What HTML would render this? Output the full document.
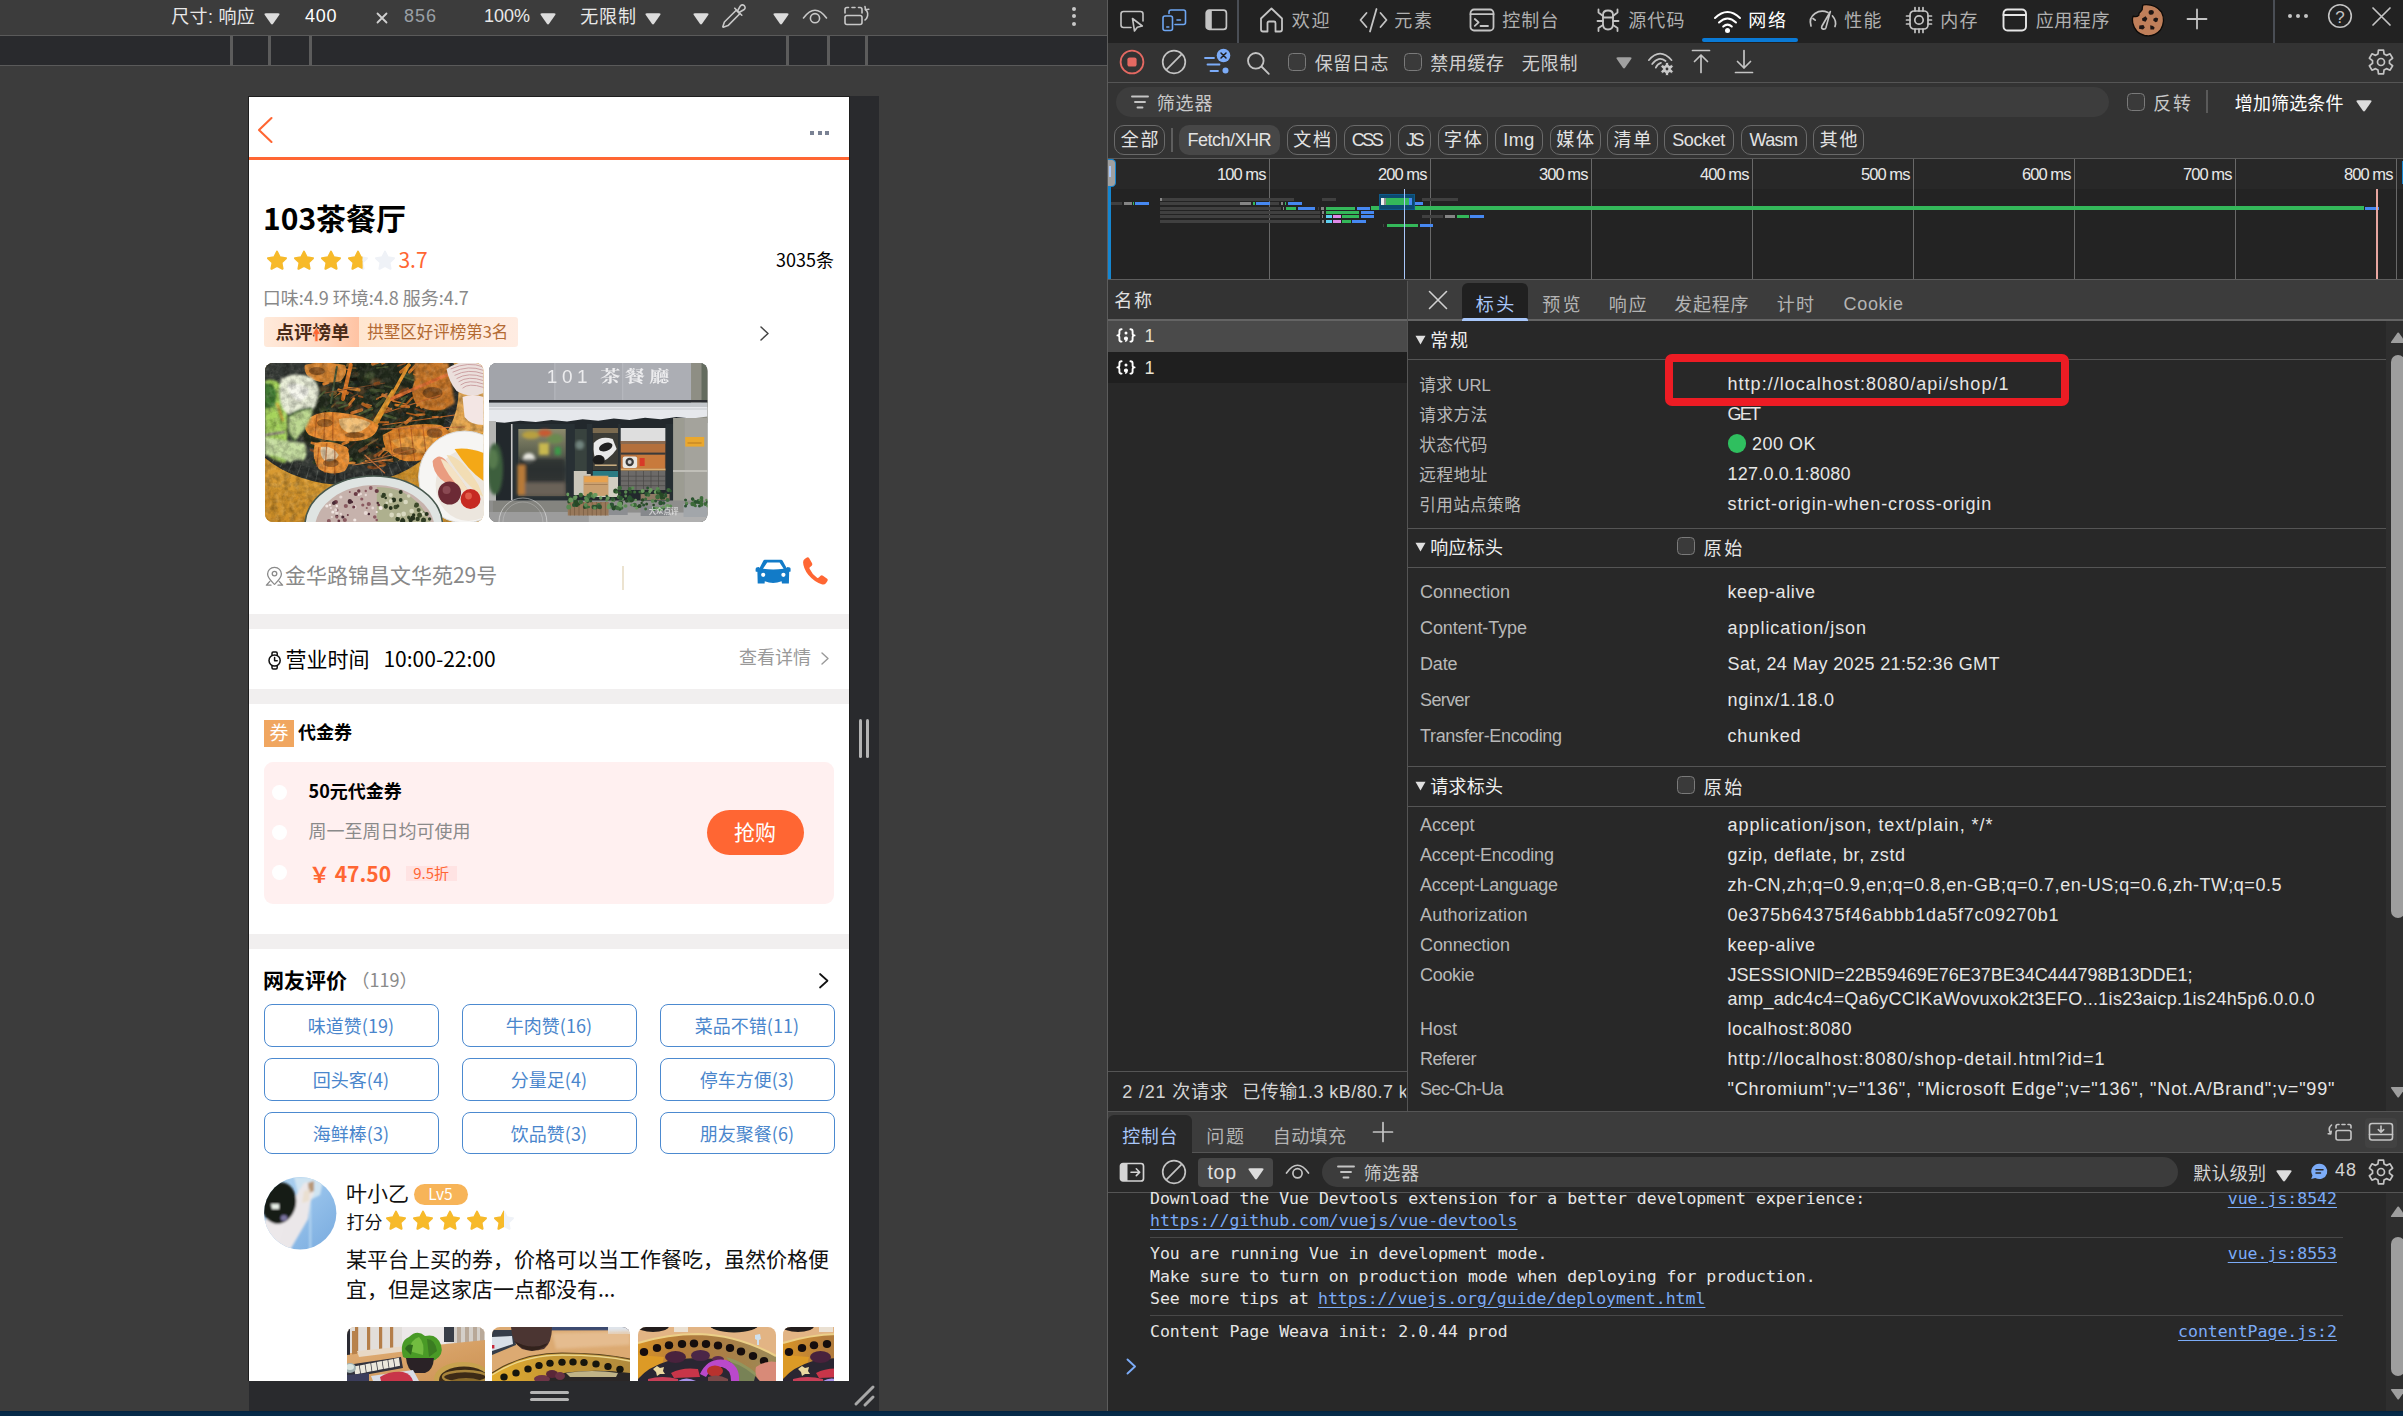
<!DOCTYPE html>
<html lang="zh-CN"><head><meta charset="utf-8"><title>shop detail devtools</title><style>
html,body{margin:0;padding:0;}
body{width:2403px;height:1416px;overflow:hidden;position:relative;background:#3c3c3c;font-family:'Liberation Sans','Noto Sans CJK SC',sans-serif;}
body>div,body>span,body>svg{position:absolute;display:block;}
body>span{white-space:pre;}
svg{overflow:visible;}
</style></head><body>
<div style="left:0px;top:0px;width:1107px;height:1411px;background:#3c3c3c;"></div>
<div style="left:0px;top:35px;width:1107px;height:1px;background:#5a5a5a;"></div>
<div style="left:0px;top:36px;width:1107px;height:29px;background:#292a2d;"></div>
<div style="left:0px;top:65px;width:1107px;height:1px;background:#5a5a5a;"></div>
<div style="left:230px;top:36px;width:3px;height:29px;background:#5c5c5c;"></div>
<div style="left:268px;top:36px;width:3px;height:29px;background:#5c5c5c;"></div>
<div style="left:309px;top:36px;width:3px;height:29px;background:#5c5c5c;"></div>
<div style="left:786px;top:36px;width:3px;height:29px;background:#5c5c5c;"></div>
<div style="left:827px;top:36px;width:3px;height:29px;background:#5c5c5c;"></div>
<div style="left:865px;top:36px;width:3px;height:29px;background:#5c5c5c;"></div>
<span id="t1" style="top:5.10px;font-size:18px;line-height:25px;color:#e8e8e8;font-family:'Liberation Sans','Noto Sans CJK SC',sans-serif;white-space:pre;left:171.28px;letter-spacing:0.321px;">尺寸: 响应</span>
<svg style="left:264px;top:13px;" width="16" height="11.7" viewBox="0 0 16 11.7" preserveAspectRatio="none"><path d="M1.8 0.2 H14.2 Q16.4 0.2 15.2 2.1 L9.1 10.799999999999999 Q8.0 12.2 6.9 10.799999999999999 L0.8 2.1 Q-0.4 0.2 1.8 0.2Z" fill="#dcdcdc"/></svg>
<span id="t2" style="top:3.70px;font-size:18px;line-height:25px;color:#ffffff;font-family:'Liberation Sans','Noto Sans CJK SC',sans-serif;white-space:pre;left:305px;letter-spacing:0.727px;">400</span>
<svg style="left:376px;top:12px;" width="12" height="12" viewBox="0 0 12 12" preserveAspectRatio="none"><path d="M1.5 1.5 L10.5 10.5 M10.5 1.5 L1.5 10.5" stroke="#d0d0d0" stroke-width="1.8" stroke-linecap="round"/></svg>
<span id="t3" style="top:3.70px;font-size:18px;line-height:25px;color:#9aa0a6;font-family:'Liberation Sans','Noto Sans CJK SC',sans-serif;white-space:pre;left:404px;letter-spacing:0.977px;">856</span>
<span id="t4" style="top:3.70px;font-size:18px;line-height:25px;color:#e8e8e8;font-family:'Liberation Sans','Noto Sans CJK SC',sans-serif;white-space:pre;left:484px;letter-spacing:-0.016px;">100%</span>
<svg style="left:540px;top:13px;" width="16" height="11.7" viewBox="0 0 16 11.7" preserveAspectRatio="none"><path d="M1.8 0.2 H14.2 Q16.4 0.2 15.2 2.1 L9.1 10.799999999999999 Q8.0 12.2 6.9 10.799999999999999 L0.8 2.1 Q-0.4 0.2 1.8 0.2Z" fill="#dcdcdc"/></svg>
<span id="t5" style="top:5.10px;font-size:18px;line-height:25px;color:#e8e8e8;font-family:'Liberation Sans','Noto Sans CJK SC',sans-serif;white-space:pre;left:580.28px;letter-spacing:0.810px;">无限制</span>
<svg style="left:645px;top:13px;" width="16" height="11.7" viewBox="0 0 16 11.7" preserveAspectRatio="none"><path d="M1.8 0.2 H14.2 Q16.4 0.2 15.2 2.1 L9.1 10.799999999999999 Q8.0 12.2 6.9 10.799999999999999 L0.8 2.1 Q-0.4 0.2 1.8 0.2Z" fill="#dcdcdc"/></svg>
<svg style="left:693px;top:13px;" width="16" height="11.7" viewBox="0 0 16 11.7" preserveAspectRatio="none"><path d="M1.8 0.2 H14.2 Q16.4 0.2 15.2 2.1 L9.1 10.799999999999999 Q8.0 12.2 6.9 10.799999999999999 L0.8 2.1 Q-0.4 0.2 1.8 0.2Z" fill="#dcdcdc"/></svg>
<svg style="left:720px;top:2px;" width="28" height="28" viewBox="0 0 28 28" preserveAspectRatio="none"><g fill="none" stroke="#c8c8c8" stroke-width="1.6" stroke-linejoin="round" stroke-linecap="round"><path d="M16.2 8.2 L19.8 11.8 L8 23.6 L3.2 25.2 L2.8 24.8 L4.4 20 Z"/><path d="M14.8 6.2 L21.8 13.2"/><path d="M17.5 9 L20.2 4.2 Q22 1.8 24.3 3.7 Q26.2 6 23.8 7.8 L19 10.5"/></g></svg>
<svg style="left:773px;top:13px;" width="16" height="11.7" viewBox="0 0 16 11.7" preserveAspectRatio="none"><path d="M1.8 0.2 H14.2 Q16.4 0.2 15.2 2.1 L9.1 10.799999999999999 Q8.0 12.2 6.9 10.799999999999999 L0.8 2.1 Q-0.4 0.2 1.8 0.2Z" fill="#dcdcdc"/></svg>
<svg style="left:802px;top:6px;" width="26" height="20" viewBox="0 0 26 20" preserveAspectRatio="none"><g fill="none" stroke="#c8c8c8" stroke-width="1.6" stroke-linecap="round"><path d="M1.5 12 Q13 -3.5 24.5 12"/><circle cx="13" cy="12.2" r="4.6"/></g></svg>
<svg style="left:843px;top:5px;" width="28" height="22" viewBox="0 0 28 22" preserveAspectRatio="none"><g fill="none" stroke="#c8c8c8" stroke-width="1.6" stroke-linecap="round" stroke-linejoin="round"><path d="M2 8 V4.5 Q2 2.5 4 2.5 H5.5 M9 2.5 H12 M15.5 2.5 H17 Q19 2.5 19 4.5 V8" stroke-dasharray="none"/><rect x="2" y="10.5" width="17" height="9" rx="2"/><path d="M22.5 4.5 Q26.5 8 23.5 13.5 L22 15"/><path d="M22 1.5 L22.5 4.8 L25.8 4.2"/></g></svg>
<div style="left:1071.5px;top:6.5px;width:4px;height:4px;background:#c8c8c8;border-radius:50%;"></div>
<div style="left:1071.5px;top:14px;width:4px;height:4px;background:#c8c8c8;border-radius:50%;"></div>
<div style="left:1071.5px;top:21.5px;width:4px;height:4px;background:#c8c8c8;border-radius:50%;"></div>
<div style="left:849px;top:96px;width:30px;height:1315px;background:#292a2d;"></div>
<div style="left:249px;top:1381px;width:630px;height:30px;background:#292a2d;"></div>
<div style="left:859px;top:719px;width:3px;height:39px;background:#b4b4b4;border-radius:1.5px;"></div>
<div style="left:866px;top:719px;width:3px;height:39px;background:#b4b4b4;border-radius:1.5px;"></div>
<div style="left:530px;top:1391px;width:39px;height:3px;background:#b4b4b4;border-radius:1.5px;"></div>
<div style="left:530px;top:1398px;width:39px;height:3px;background:#b4b4b4;border-radius:1.5px;"></div>
<svg style="left:852px;top:1382px;" width="26" height="26" viewBox="0 0 26 26" preserveAspectRatio="none"><path d="M4 22 L21 5 M13 23 L21 15" stroke="#a8a8a8" stroke-width="3" stroke-linecap="round"/></svg>
<div style="left:0px;top:1411px;width:2403px;height:5px;background:linear-gradient(#02223f,#062a48 40%);"></div>
<div style="left:248px;top:96px;width:602px;height:1285px;background:#1e1e1e;"></div>
<div style="left:249px;top:97px;width:600px;height:1284px;background:#ffffff;"></div>
<svg style="left:258px;top:116.5px;" width="14.5" height="26" viewBox="0 0 14.5 26" preserveAspectRatio="none"><path d="M13.5 1 L1 13.0 L13.5 25" fill="none" stroke="#ff6633" stroke-width="2.1" stroke-linecap="round" stroke-linejoin="round"/></svg>
<div style="left:810.4px;top:131.4px;width:3.9px;height:3.9px;background:#7a8294;"></div>
<div style="left:817.8px;top:131.4px;width:3.9px;height:3.9px;background:#7a8294;"></div>
<div style="left:825.1999999999999px;top:131.4px;width:3.9px;height:3.9px;background:#7a8294;"></div>
<div style="left:249px;top:157px;width:600px;height:3px;background:#ff6633;"></div>
<span id="t6" style="top:195.60px;font-size:30px;line-height:42px;color:#000;font-family:'Noto Sans CJK SC','Liberation Sans',sans-serif;white-space:pre;left:263.0px;font-weight:700;">103茶餐厅</span>
<svg style="left:267px;top:249.6px;" width="135" height="23" viewBox="0 0 135 23" preserveAspectRatio="none"><polygon points="10.00,1.65 12.78,7.28 18.99,8.18 14.49,12.56 15.55,18.75 10.00,15.83 4.45,18.75 5.51,12.56 1.01,8.18 7.22,7.28" fill="#eff2f7" stroke="#eff2f7" stroke-width="2" stroke-linejoin="round"/><polygon points="10.00,1.65 12.78,7.28 18.99,8.18 14.49,12.56 15.55,18.75 10.00,15.83 4.45,18.75 5.51,12.56 1.01,8.18 7.22,7.28" fill="#f7ba2a" stroke="#f7ba2a" stroke-width="2" stroke-linejoin="round"/><polygon points="37.00,1.65 39.78,7.28 45.99,8.18 41.49,12.56 42.55,18.75 37.00,15.83 31.45,18.75 32.51,12.56 28.01,8.18 34.22,7.28" fill="#eff2f7" stroke="#eff2f7" stroke-width="2" stroke-linejoin="round"/><polygon points="37.00,1.65 39.78,7.28 45.99,8.18 41.49,12.56 42.55,18.75 37.00,15.83 31.45,18.75 32.51,12.56 28.01,8.18 34.22,7.28" fill="#f7ba2a" stroke="#f7ba2a" stroke-width="2" stroke-linejoin="round"/><polygon points="64.00,1.65 66.78,7.28 72.99,8.18 68.49,12.56 69.55,18.75 64.00,15.83 58.45,18.75 59.51,12.56 55.01,8.18 61.22,7.28" fill="#eff2f7" stroke="#eff2f7" stroke-width="2" stroke-linejoin="round"/><polygon points="64.00,1.65 66.78,7.28 72.99,8.18 68.49,12.56 69.55,18.75 64.00,15.83 58.45,18.75 59.51,12.56 55.01,8.18 61.22,7.28" fill="#f7ba2a" stroke="#f7ba2a" stroke-width="2" stroke-linejoin="round"/><polygon points="91.00,1.65 93.78,7.28 99.99,8.18 95.49,12.56 96.55,18.75 91.00,15.83 85.45,18.75 86.51,12.56 82.01,8.18 88.22,7.28" fill="#eff2f7" stroke="#eff2f7" stroke-width="2" stroke-linejoin="round"/><clipPath id="sc267_249"><rect x="80" y="-1" width="15.4" height="24"/></clipPath><polygon clip-path="url(#sc267_249)" points="91.00,1.65 93.78,7.28 99.99,8.18 95.49,12.56 96.55,18.75 91.00,15.83 85.45,18.75 86.51,12.56 82.01,8.18 88.22,7.28" fill="#f7ba2a" stroke="#f7ba2a" stroke-width="2" stroke-linejoin="round"/><polygon points="118.00,1.65 120.78,7.28 126.99,8.18 122.49,12.56 123.55,18.75 118.00,15.83 112.45,18.75 113.51,12.56 109.01,8.18 115.22,7.28" fill="#eff2f7" stroke="#eff2f7" stroke-width="2" stroke-linejoin="round"/></svg>
<span id="t7" style="top:244.91px;font-size:21px;line-height:29px;color:#ff6633;font-family:'Noto Sans CJK SC','Liberation Sans',sans-serif;white-space:pre;left:398.45px;">3.7</span>
<span id="t8" style="top:246.88px;font-size:18px;line-height:25px;color:#000;font-family:'Noto Sans CJK SC','Liberation Sans',sans-serif;white-space:pre;right:1569.1px;">3035条</span>
<span id="t9" style="top:285.38px;font-size:18px;line-height:25px;color:#888;font-family:'Noto Sans CJK SC','Liberation Sans',sans-serif;white-space:pre;left:262.70000000000005px;">口味:4.9 环境:4.8 服务:4.7</span>
<div style="left:264px;top:317px;width:95px;height:30px;background:linear-gradient(90deg,#ffeadb 0%,#ffd9c2 60%,#ffc3a3 100%);border-radius:3px 0 0 3px;"></div>
<div style="left:359px;top:317px;width:159px;height:30px;background:linear-gradient(90deg,#ffe6d0,#ffece2);border-radius:0 3px 3px 0;"></div>
<span id="t10" style="top:317.83px;font-size:18.5px;line-height:26px;color:#4a2a17;font-family:'Noto Sans CJK SC','Liberation Sans',sans-serif;white-space:pre;left:275.375px;font-weight:700;">点评榜单</span>
<svg style="left:311.6px;top:327.3px;" width="8.8" height="14.8" viewBox="0 0 8.8 14.8" preserveAspectRatio="none"><path d="M4.4 0.3 L8.5 7.3 H5.9 V14.5 H2.9 V7.3 H0.3 Z" fill="#ff6633" stroke="#ffd4bc" stroke-width="0.7"/></svg>
<span id="t11" style="top:320.01px;font-size:16.5px;line-height:23px;color:#b36a33;font-family:'Noto Sans CJK SC','Liberation Sans',sans-serif;white-space:pre;left:367.175px;">拱墅区好评榜第3名</span>
<svg style="left:760px;top:326px;" width="9" height="15" viewBox="0 0 9 15" preserveAspectRatio="none"><path d="M1 1 L8 7.5 L1 14" fill="none" stroke="#444" stroke-width="1.5" stroke-linecap="round" stroke-linejoin="round"/></svg>
<svg style="left:265px;top:566px;" width="19" height="21" viewBox="0 0 19 21" preserveAspectRatio="none"><g fill="none" stroke="#8a8a8a" stroke-width="1.3" stroke-linejoin="round" stroke-linecap="round"><path d="M9.5 1.4 C5.4 1.4 2.6 4.4 2.6 8 C2.6 12 6.5 15.2 9.5 18.4 C12.5 15.2 16.4 12 16.4 8 C16.4 4.4 13.6 1.4 9.5 1.4Z"/><circle cx="9.5" cy="7.6" r="2.3"/><path d="M4.8 15.4 L1.4 19.2 H6 M14.2 15.4 L17.6 19.2 H13"/></g></svg>
<span id="t12" style="top:560.11px;font-size:21px;line-height:29px;color:#888;font-family:'Noto Sans CJK SC','Liberation Sans',sans-serif;white-space:pre;left:284.95px;">金华路锦昌文华苑29号</span>
<div style="left:622px;top:566px;width:2px;height:24px;background:#ece3d0;"></div>
<svg style="left:755px;top:559.3px;" width="36.2" height="25.4" viewBox="0 0 36.2 25.4" preserveAspectRatio="none"><path d="M9.8 0.8 H26 Q27.2 0.8 27.8 1.9 L31.6 9 L32.4 8 Q35.8 8 35.6 10.2 V12.2 Q35.6 12.8 34.4 12.8 L34.2 13 L33.9 24.6 H27 L26.6 22.2 Q18 25.8 9.8 22.2 L9.6 24.6 H2.7 L2.4 13 L2.2 12.8 Q0.6 12.8 0.6 12.2 V10.2 Q0.6 8 4 8 L4.6 9 L8.2 1.9 Q8.8 0.8 9.8 0.8 Z M12.2 3.4 H24.6 L28.6 9.8 Q18 11.2 8 9.8 Z" fill="#127bc8" fill-rule="evenodd"/><circle cx="8.2" cy="15.8" r="2.1" fill="#fff"/><circle cx="28.4" cy="15.8" r="2.1" fill="#fff"/></svg>
<svg style="left:800.3px;top:556.4px;" width="28.8" height="29.6" viewBox="0 0 30 30" preserveAspectRatio="none"><path d="M7.2 1.6 Q8.6 0.8 9.6 2.2 L12.6 7.4 Q13.3 8.8 12.2 9.8 L10.2 11.4 Q9.6 12 10 13 Q12.6 18.6 17.8 22 Q18.8 22.6 19.6 21.8 L21.4 20 Q22.6 19 23.9 19.9 L28.3 23 Q29.5 24 28.6 25.4 L27 27.6 Q25.4 29.4 22.6 28.6 Q14.8 26.2 8.6 19 Q3.4 12.6 3.2 6.4 Q3.2 3.8 5.2 2.7 Z" fill="#ff6633"/></svg>
<div style="left:249px;top:614px;width:600px;height:15px;background:#f1efef;"></div>
<div style="left:249px;top:689px;width:600px;height:15px;background:#f1efef;"></div>
<div style="left:249px;top:934px;width:600px;height:15px;background:#f1efef;"></div>
<svg style="left:266.5px;top:651px;" width="16" height="19" viewBox="0 0 16 19" preserveAspectRatio="none"><g fill="none" stroke="#111" stroke-width="1.5"><circle cx="7.6" cy="9.5" r="5.6"/><path d="M5 4.4 V2.2 Q5 1 6.2 1 H9 Q10.2 1 10.2 2.2 V4.4 M5 14.6 V16.8 Q5 18 6.2 18 H9 Q10.2 18 10.2 16.8 V14.6 M7.6 6.4 V9.8 H10.2" stroke-linecap="round" stroke-linejoin="round"/></g></svg>
<span id="t13" style="top:644.11px;font-size:21px;line-height:29px;color:#000;font-family:'Noto Sans CJK SC','Liberation Sans',sans-serif;white-space:pre;left:285.45px;">营业时间</span>
<span id="t14" style="top:644.11px;font-size:21px;line-height:29px;color:#000;font-family:'Noto Sans CJK SC','Liberation Sans',sans-serif;white-space:pre;left:383.45px;">10:00-22:00</span>
<span id="t15" style="top:644.38px;font-size:18px;line-height:25px;color:#999;font-family:'Noto Sans CJK SC','Liberation Sans',sans-serif;white-space:pre;left:739.1px;">查看详情</span>
<svg style="left:821px;top:652px;" width="8" height="13" viewBox="0 0 8 13" preserveAspectRatio="none"><path d="M1 1 L7 6.5 L1 12" fill="none" stroke="#999" stroke-width="1.4" stroke-linecap="round" stroke-linejoin="round"/></svg>
<div style="left:264px;top:720px;width:30px;height:27px;background:#f0a660;"></div>
<span id="t16" style="top:718.29px;font-size:19px;line-height:27px;color:#fff;font-family:'Noto Sans CJK SC','Liberation Sans',sans-serif;white-space:pre;left:269.5px;">券</span>
<span id="t17" style="top:719.38px;font-size:18px;line-height:25px;color:#000;font-family:'Noto Sans CJK SC','Liberation Sans',sans-serif;white-space:pre;left:298.1px;font-weight:700;">代金券</span>
<div style="left:264px;top:762px;width:570px;height:142px;background:#fff0f0;border-radius:9px;"></div>
<div style="left:271.5px;top:784.5px;width:15px;height:15px;background:#fff;border-radius:50%;"></div>
<div style="left:271.5px;top:824.5px;width:15px;height:15px;background:#fff;border-radius:50%;"></div>
<div style="left:271.5px;top:864.5px;width:15px;height:15px;background:#fff;border-radius:50%;"></div>
<span id="t18" style="top:777.88px;font-size:18px;line-height:25px;color:#000;font-family:'Noto Sans CJK SC','Liberation Sans',sans-serif;white-space:pre;left:308.6px;font-weight:700;">50元代金券</span>
<span id="t19" style="top:818.38px;font-size:18px;line-height:25px;color:#8a8a8a;font-family:'Noto Sans CJK SC','Liberation Sans',sans-serif;white-space:pre;left:308.6px;">周一至周日均可使用</span>
<span id="t20" style="top:859.11px;font-size:21px;line-height:29px;color:#ff6633;font-family:'Noto Sans CJK SC','Liberation Sans',sans-serif;white-space:pre;left:308.95px;font-weight:700;">￥ 47.50</span>
<div style="left:406px;top:866px;width:51px;height:15px;background:#ffe3e3;"></div>
<span id="t21" style="top:862.15px;font-size:15px;line-height:21px;color:#ff6633;font-family:'Noto Sans CJK SC','Liberation Sans',sans-serif;white-space:pre;left:413.25px;">9.5折</span>
<div style="left:707px;top:810px;width:97px;height:45px;background:#ff6633;border-radius:23px;"></div>
<span id="t22" style="top:816.61px;font-size:21px;line-height:29px;color:#fff;font-family:'Noto Sans CJK SC','Liberation Sans',sans-serif;white-space:pre;left:733.95px;">抢购</span>
<span id="t23" style="top:964.61px;font-size:21px;line-height:29px;color:#000;font-family:'Noto Sans CJK SC','Liberation Sans',sans-serif;white-space:pre;left:262.95px;font-weight:700;">网友评价</span>
<span id="t24" style="top:966.88px;font-size:18px;line-height:25px;color:#8a8a8a;font-family:'Noto Sans CJK SC','Liberation Sans',sans-serif;white-space:pre;left:351.5px;">（119）</span>
<svg style="left:819px;top:973px;" width="9.5" height="15.5" viewBox="0 0 9.5 15.5" preserveAspectRatio="none"><path d="M1 1 L8.5 7.75 L1 14.5" fill="none" stroke="#111" stroke-width="1.7" stroke-linecap="round" stroke-linejoin="round"/></svg>
<div style="left:264px;top:1004px;width:174.5px;height:42.5px;box-sizing:border-box;border:1.5px solid #4c8ad0;border-radius:8px;"></div>
<span id="t25" style="top:1013.28px;font-size:18px;line-height:25px;color:#4a86cc;font-family:'Noto Sans CJK SC','Liberation Sans',sans-serif;white-space:pre;left:307.85px;">味道赞(19)</span>
<div style="left:462px;top:1004px;width:174.5px;height:42.5px;box-sizing:border-box;border:1.5px solid #4c8ad0;border-radius:8px;"></div>
<span id="t26" style="top:1013.28px;font-size:18px;line-height:25px;color:#4a86cc;font-family:'Noto Sans CJK SC','Liberation Sans',sans-serif;white-space:pre;left:505.85px;">牛肉赞(16)</span>
<div style="left:660px;top:1004px;width:174.5px;height:42.5px;box-sizing:border-box;border:1.5px solid #4c8ad0;border-radius:8px;"></div>
<span id="t27" style="top:1013.28px;font-size:18px;line-height:25px;color:#4a86cc;font-family:'Noto Sans CJK SC','Liberation Sans',sans-serif;white-space:pre;left:694.85px;">菜品不错(11)</span>
<div style="left:264px;top:1058px;width:174.5px;height:42.5px;box-sizing:border-box;border:1.5px solid #4c8ad0;border-radius:8px;"></div>
<span id="t28" style="top:1067.28px;font-size:18px;line-height:25px;color:#4a86cc;font-family:'Noto Sans CJK SC','Liberation Sans',sans-serif;white-space:pre;left:312.85px;">回头客(4)</span>
<div style="left:462px;top:1058px;width:174.5px;height:42.5px;box-sizing:border-box;border:1.5px solid #4c8ad0;border-radius:8px;"></div>
<span id="t29" style="top:1067.28px;font-size:18px;line-height:25px;color:#4a86cc;font-family:'Noto Sans CJK SC','Liberation Sans',sans-serif;white-space:pre;left:510.85px;">分量足(4)</span>
<div style="left:660px;top:1058px;width:174.5px;height:42.5px;box-sizing:border-box;border:1.5px solid #4c8ad0;border-radius:8px;"></div>
<span id="t30" style="top:1067.28px;font-size:18px;line-height:25px;color:#4a86cc;font-family:'Noto Sans CJK SC','Liberation Sans',sans-serif;white-space:pre;left:699.85px;">停车方便(3)</span>
<div style="left:264px;top:1111.5px;width:174.5px;height:42.5px;box-sizing:border-box;border:1.5px solid #4c8ad0;border-radius:8px;"></div>
<span id="t31" style="top:1120.78px;font-size:18px;line-height:25px;color:#4a86cc;font-family:'Noto Sans CJK SC','Liberation Sans',sans-serif;white-space:pre;left:312.85px;">海鲜棒(3)</span>
<div style="left:462px;top:1111.5px;width:174.5px;height:42.5px;box-sizing:border-box;border:1.5px solid #4c8ad0;border-radius:8px;"></div>
<span id="t32" style="top:1120.78px;font-size:18px;line-height:25px;color:#4a86cc;font-family:'Noto Sans CJK SC','Liberation Sans',sans-serif;white-space:pre;left:510.85px;">饮品赞(3)</span>
<div style="left:660px;top:1111.5px;width:174.5px;height:42.5px;box-sizing:border-box;border:1.5px solid #4c8ad0;border-radius:8px;"></div>
<span id="t33" style="top:1120.78px;font-size:18px;line-height:25px;color:#4a86cc;font-family:'Noto Sans CJK SC','Liberation Sans',sans-serif;white-space:pre;left:699.85px;">朋友聚餐(6)</span>
<span id="t34" style="top:1177.61px;font-size:21px;line-height:29px;color:#111;font-family:'Noto Sans CJK SC','Liberation Sans',sans-serif;white-space:pre;left:345.95px;">叶小乙</span>
<div style="left:414px;top:1184px;width:54px;height:21px;background:#f7b458;border-radius:11px;"></div>
<span id="t35" style="top:1182.11px;font-size:15.5px;line-height:22px;color:#fff;font-family:'Noto Sans CJK SC','Liberation Sans',sans-serif;white-space:pre;left:428.225px;">Lv5</span>
<span id="t36" style="top:1208.88px;font-size:18px;line-height:25px;color:#111;font-family:'Noto Sans CJK SC','Liberation Sans',sans-serif;white-space:pre;left:346.6px;">打分</span>
<svg style="left:386px;top:1210px;" width="135" height="23" viewBox="0 0 135 23" preserveAspectRatio="none"><polygon points="10.00,1.65 12.78,7.28 18.99,8.18 14.49,12.56 15.55,18.75 10.00,15.83 4.45,18.75 5.51,12.56 1.01,8.18 7.22,7.28" fill="#eff2f7" stroke="#eff2f7" stroke-width="2" stroke-linejoin="round"/><polygon points="10.00,1.65 12.78,7.28 18.99,8.18 14.49,12.56 15.55,18.75 10.00,15.83 4.45,18.75 5.51,12.56 1.01,8.18 7.22,7.28" fill="#f7ba2a" stroke="#f7ba2a" stroke-width="2" stroke-linejoin="round"/><polygon points="37.00,1.65 39.78,7.28 45.99,8.18 41.49,12.56 42.55,18.75 37.00,15.83 31.45,18.75 32.51,12.56 28.01,8.18 34.22,7.28" fill="#eff2f7" stroke="#eff2f7" stroke-width="2" stroke-linejoin="round"/><polygon points="37.00,1.65 39.78,7.28 45.99,8.18 41.49,12.56 42.55,18.75 37.00,15.83 31.45,18.75 32.51,12.56 28.01,8.18 34.22,7.28" fill="#f7ba2a" stroke="#f7ba2a" stroke-width="2" stroke-linejoin="round"/><polygon points="64.00,1.65 66.78,7.28 72.99,8.18 68.49,12.56 69.55,18.75 64.00,15.83 58.45,18.75 59.51,12.56 55.01,8.18 61.22,7.28" fill="#eff2f7" stroke="#eff2f7" stroke-width="2" stroke-linejoin="round"/><polygon points="64.00,1.65 66.78,7.28 72.99,8.18 68.49,12.56 69.55,18.75 64.00,15.83 58.45,18.75 59.51,12.56 55.01,8.18 61.22,7.28" fill="#f7ba2a" stroke="#f7ba2a" stroke-width="2" stroke-linejoin="round"/><polygon points="91.00,1.65 93.78,7.28 99.99,8.18 95.49,12.56 96.55,18.75 91.00,15.83 85.45,18.75 86.51,12.56 82.01,8.18 88.22,7.28" fill="#eff2f7" stroke="#eff2f7" stroke-width="2" stroke-linejoin="round"/><polygon points="91.00,1.65 93.78,7.28 99.99,8.18 95.49,12.56 96.55,18.75 91.00,15.83 85.45,18.75 86.51,12.56 82.01,8.18 88.22,7.28" fill="#f7ba2a" stroke="#f7ba2a" stroke-width="2" stroke-linejoin="round"/><polygon points="118.00,1.65 120.78,7.28 126.99,8.18 122.49,12.56 123.55,18.75 118.00,15.83 112.45,18.75 113.51,12.56 109.01,8.18 115.22,7.28" fill="#eff2f7" stroke="#eff2f7" stroke-width="2" stroke-linejoin="round"/><clipPath id="sc386_1210"><rect x="107" y="-1" width="11.0" height="24"/></clipPath><polygon clip-path="url(#sc386_1210)" points="118.00,1.65 120.78,7.28 126.99,8.18 122.49,12.56 123.55,18.75 118.00,15.83 112.45,18.75 113.51,12.56 109.01,8.18 115.22,7.28" fill="#f7ba2a" stroke="#f7ba2a" stroke-width="2" stroke-linejoin="round"/></svg>
<span id="t37" style="top:1244.11px;font-size:21px;line-height:29px;color:#111;font-family:'Noto Sans CJK SC','Liberation Sans',sans-serif;white-space:pre;left:345.95px;">某平台上买的券，价格可以当工作餐吃，虽然价格便</span>
<span id="t38" style="top:1274.11px;font-size:21px;line-height:29px;color:#111;font-family:'Noto Sans CJK SC','Liberation Sans',sans-serif;white-space:pre;left:345.95px;">宜，但是这家店一点都没有...</span>
<svg style="left:264.7px;top:362.7px;width:218.5px;height:159px;" width="219" height="159" viewBox="0 0 219 159" preserveAspectRatio="none"><defs><clipPath id="p1c"><rect width="219" height="159" rx="8"/></clipPath><filter id="b1" x="-10%" y="-10%" width="120%" height="120%"><feGaussianBlur stdDeviation="1.1"/></filter><filter id="b2" x="-10%" y="-10%" width="120%" height="120%"><feGaussianBlur stdDeviation="2.2"/></filter><filter id="b0" x="-10%" y="-10%" width="120%" height="120%"><feGaussianBlur stdDeviation="0.5"/></filter><linearGradient id="wood" x1="0" y1="0" x2="1" y2="1"><stop offset="0" stop-color="#e0a848"/><stop offset="0.5" stop-color="#d8982c"/><stop offset="1" stop-color="#c88a28"/></linearGradient><filter id="nz" x="0" y="0" width="100%" height="100%"><feTurbulence type="fractalNoise" baseFrequency="0.16" numOctaves="3" seed="4"/><feColorMatrix type="matrix" values="0 0 0 0 0  0 0 0 0 0  0 0 0 0 0  1.6 0 0 0 -0.55"/></filter><filter id="nzw" x="0" y="0" width="100%" height="100%"><feTurbulence type="fractalNoise" baseFrequency="0.2" numOctaves="3" seed="9"/><feColorMatrix type="matrix" values="0 0 0 0 1  0 0 0 0 0.95  0 0 0 0 0.8  1.4 0 0 0 -0.6"/></filter><clipPath id="plin"><ellipse cx="80" cy="26" rx="104" ry="84"/></clipPath></defs><g clip-path="url(#p1c)"><rect width="219" height="159" fill="url(#wood)"/><path d="M0 125 L40 132 L60 159 L0 159Z" fill="#c07c14" filter="url(#b2)"/><path d="M0 100 L70 128 L45 159 L0 159Z" fill="#d89a30" opacity="0.7" filter="url(#b2)"/><rect x="150" y="0" width="69" height="70" fill="#e8a850"/><ellipse cx="80" cy="28" rx="114" ry="94" fill="#2a2e2c"/><ellipse cx="80" cy="26" rx="104" ry="84" fill="#353a36"/><path d="M177.7 54.7 L186.2 59.8" stroke="#4a504c" stroke-width="1"/><path d="M174.3 61.5 L182.4 67.3" stroke="#4a504c" stroke-width="1"/><path d="M170.1 68.0 L177.9 74.5" stroke="#4a504c" stroke-width="1"/><path d="M165.2 74.2 L172.6 81.3" stroke="#4a504c" stroke-width="1"/><path d="M159.7 80.0 L166.6 87.8" stroke="#4a504c" stroke-width="1"/><path d="M153.5 85.4 L159.9 93.8" stroke="#4a504c" stroke-width="1"/><path d="M146.8 90.3 L152.6 99.2" stroke="#4a504c" stroke-width="1"/><path d="M139.7 94.8 L144.8 104.2" stroke="#4a504c" stroke-width="1"/><path d="M132.0 98.7 L136.5 108.5" stroke="#4a504c" stroke-width="1"/><path d="M124.0 102.1 L127.8 112.3" stroke="#4a504c" stroke-width="1"/><path d="M115.6 104.9 L118.6 115.4" stroke="#4a504c" stroke-width="1"/><path d="M106.9 107.1 L109.2 117.8" stroke="#4a504c" stroke-width="1"/><path d="M98.1 108.7 L99.6 119.6" stroke="#4a504c" stroke-width="1"/><path d="M89.1 109.7 L89.8 120.6" stroke="#4a504c" stroke-width="1"/><path d="M80.0 110.0 L80.0 121.0" stroke="#4a504c" stroke-width="1"/><path d="M70.9 109.7 L70.2 120.6" stroke="#4a504c" stroke-width="1"/><path d="M61.9 108.7 L60.4 119.6" stroke="#4a504c" stroke-width="1"/><path d="M53.1 107.1 L50.8 117.8" stroke="#4a504c" stroke-width="1"/><path d="M44.4 104.9 L41.4 115.4" stroke="#4a504c" stroke-width="1"/><path d="M36.0 102.1 L32.2 112.3" stroke="#4a504c" stroke-width="1"/><path d="M28.0 98.7 L23.5 108.5" stroke="#4a504c" stroke-width="1"/><path d="M20.3 94.8 L15.2 104.2" stroke="#4a504c" stroke-width="1"/><path d="M13.2 90.3 L7.4 99.2" stroke="#4a504c" stroke-width="1"/><path d="M6.5 85.4 L0.1 93.8" stroke="#4a504c" stroke-width="1"/><path d="M0.3 80.0 L-6.6 87.8" stroke="#4a504c" stroke-width="1"/><path d="M-5.2 74.2 L-12.6 81.3" stroke="#4a504c" stroke-width="1"/><path d="M-10.1 68.0 L-17.9 74.5" stroke="#4a504c" stroke-width="1"/><path d="M-14.3 61.5 L-22.4 67.3" stroke="#4a504c" stroke-width="1"/><g filter="url(#b1)"><ellipse cx="104" cy="46" rx="78" ry="56" fill="#242a1e"/><ellipse cx="85" cy="19" rx="2.3" ry="2.8" fill="#3a4a2a"/><ellipse cx="91" cy="11" rx="2.9" ry="1.7" fill="#54452a"/><ellipse cx="97" cy="28" rx="3.7" ry="3.6" fill="#54452a"/><ellipse cx="60" cy="26" rx="5.8" ry="2.9" fill="#54452a"/><ellipse cx="95" cy="98" rx="4.2" ry="1.8" fill="#3a4a2a"/><ellipse cx="97" cy="56" rx="3.2" ry="3.5" fill="#54452a"/><ellipse cx="68" cy="60" rx="3.5" ry="2.9" fill="#1e241c"/><ellipse cx="53" cy="11" rx="4.0" ry="2.8" fill="#1e241c"/><ellipse cx="142" cy="49" rx="3.4" ry="2.1" fill="#26321e"/><ellipse cx="67" cy="79" rx="4.3" ry="2.8" fill="#3a4a2a"/><ellipse cx="154" cy="74" rx="4.4" ry="1.7" fill="#4a3a28"/><ellipse cx="109" cy="21" rx="2.6" ry="2.7" fill="#4a3a28"/><ellipse cx="50" cy="68" rx="4.3" ry="3.7" fill="#54452a"/><ellipse cx="84" cy="71" rx="4.0" ry="3.5" fill="#54452a"/><ellipse cx="54" cy="14" rx="3.9" ry="3.2" fill="#4a3a28"/><ellipse cx="53" cy="72" rx="6.0" ry="3.6" fill="#54452a"/><ellipse cx="81" cy="42" rx="2.1" ry="2.7" fill="#4a3a28"/><ellipse cx="66" cy="16" rx="2.9" ry="2.2" fill="#3a4a2a"/><ellipse cx="137" cy="43" rx="2.3" ry="2.6" fill="#26321e"/><ellipse cx="114" cy="89" rx="5.5" ry="2.2" fill="#26321e"/><ellipse cx="97" cy="39" rx="5.8" ry="1.9" fill="#26321e"/><ellipse cx="67" cy="27" rx="2.0" ry="3.6" fill="#1e241c"/><ellipse cx="68" cy="32" rx="3.7" ry="2.4" fill="#1e241c"/><ellipse cx="116" cy="96" rx="5.8" ry="3.1" fill="#54452a"/><ellipse cx="137" cy="48" rx="3.6" ry="2.5" fill="#54452a"/><ellipse cx="58" cy="65" rx="2.8" ry="4.0" fill="#3a4a2a"/><ellipse cx="100" cy="15" rx="2.2" ry="1.5" fill="#54452a"/><ellipse cx="64" cy="15" rx="4.5" ry="1.7" fill="#4a3a28"/><ellipse cx="71" cy="41" rx="5.8" ry="3.0" fill="#4a3a28"/><ellipse cx="104" cy="16" rx="6.0" ry="2.7" fill="#26321e"/><ellipse cx="105" cy="13" rx="5.0" ry="3.4" fill="#3a4a2a"/><ellipse cx="105" cy="71" rx="2.1" ry="3.9" fill="#54452a"/><ellipse cx="111" cy="19" rx="5.7" ry="3.4" fill="#54452a"/><ellipse cx="82" cy="66" rx="4.8" ry="2.2" fill="#3a4a2a"/><ellipse cx="91" cy="21" rx="4.1" ry="3.4" fill="#1e241c"/><ellipse cx="86" cy="26" rx="5.2" ry="3.5" fill="#1e241c"/><ellipse cx="137" cy="27" rx="4.0" ry="3.3" fill="#54452a"/><ellipse cx="169" cy="80" rx="3.0" ry="3.2" fill="#26321e"/><ellipse cx="165" cy="47" rx="5.8" ry="2.4" fill="#4a3a28"/><ellipse cx="73" cy="27" rx="3.4" ry="2.7" fill="#1e241c"/><ellipse cx="168" cy="63" rx="3.9" ry="3.1" fill="#3a4a2a"/><ellipse cx="145" cy="13" rx="5.6" ry="3.5" fill="#3a4a2a"/><ellipse cx="139" cy="50" rx="3.7" ry="3.1" fill="#1e241c"/><ellipse cx="56" cy="95" rx="3.9" ry="3.4" fill="#26321e"/><ellipse cx="56" cy="20" rx="2.1" ry="3.0" fill="#1e241c"/><ellipse cx="103" cy="67" rx="5.3" ry="4.0" fill="#54452a"/><ellipse cx="127" cy="38" rx="4.2" ry="1.6" fill="#54452a"/><ellipse cx="145" cy="74" rx="4.1" ry="3.8" fill="#3a4a2a"/><ellipse cx="99" cy="88" rx="2.1" ry="2.0" fill="#1e241c"/><ellipse cx="108" cy="78" rx="3.0" ry="2.5" fill="#4a3a28"/><ellipse cx="61" cy="91" rx="5.6" ry="3.2" fill="#4a3a28"/><ellipse cx="147" cy="54" rx="2.5" ry="1.9" fill="#54452a"/><ellipse cx="109" cy="88" rx="4.4" ry="3.4" fill="#1e241c"/><ellipse cx="64" cy="18" rx="4.9" ry="2.9" fill="#54452a"/><ellipse cx="86" cy="54" rx="3.9" ry="3.4" fill="#54452a"/><ellipse cx="155" cy="10" rx="3.1" ry="3.4" fill="#1e241c"/><ellipse cx="108" cy="58" rx="3.8" ry="3.0" fill="#3a4a2a"/><ellipse cx="108" cy="54" rx="3.8" ry="2.8" fill="#4a3a28"/><ellipse cx="105" cy="94" rx="5.5" ry="3.9" fill="#54452a"/><ellipse cx="77" cy="58" rx="5.4" ry="1.8" fill="#1e241c"/><ellipse cx="60" cy="47" rx="4.7" ry="2.6" fill="#3a4a2a"/><ellipse cx="72" cy="34" rx="5.6" ry="1.9" fill="#3a4a2a"/><ellipse cx="135" cy="68" rx="3.0" ry="1.8" fill="#1e241c"/><ellipse cx="103" cy="76" rx="3.6" ry="2.7" fill="#3a4a2a"/><ellipse cx="169" cy="84" rx="4.8" ry="4.0" fill="#1e241c"/><ellipse cx="95" cy="45" rx="3.3" ry="3.3" fill="#4a3a28"/><ellipse cx="47" cy="58" rx="4.8" ry="2.5" fill="#26321e"/><ellipse cx="110" cy="33" rx="2.5" ry="3.8" fill="#3a4a2a"/><ellipse cx="74" cy="88" rx="3.1" ry="1.6" fill="#3a4a2a"/><ellipse cx="142" cy="31" rx="5.3" ry="3.6" fill="#1e241c"/></g><g clip-path="url(#plin)" stroke-linecap="round" filter="url(#b0)"><path d="M141 98 l8.9 -3.0" stroke="#1f2a1a" stroke-width="2.5"/><path d="M145 9 l7.4 -8.0" stroke="#d87a28" stroke-width="3.2"/><path d="M83 2 l4.7 -4.6" stroke="#7a5a2a" stroke-width="3.1"/><path d="M54 90 l7.1 -1.9" stroke="#1f2a1a" stroke-width="2.1"/><path d="M176 65 l7.4 -8.3" stroke="#2c3a22" stroke-width="3.3"/><path d="M82 19 l9.5 4.1" stroke="#1f2a1a" stroke-width="2.9"/><path d="M86 52 l5.9 -4.5" stroke="#1a2016" stroke-width="3.4"/><path d="M49 2 l13.5 -2.6" stroke="#1f2a1a" stroke-width="2.2"/><path d="M179 11 l8.1 2.0" stroke="#3a2a1a" stroke-width="2.4"/><path d="M172 101 l5.5 -2.8" stroke="#3c4a2a" stroke-width="2.0"/><path d="M164 73 l8.0 -0.1" stroke="#b4601f" stroke-width="3.4"/><path d="M165 1 l12.8 -0.3" stroke="#d87a28" stroke-width="1.6"/><path d="M56 87 l10.2 3.4" stroke="#6a3a1c" stroke-width="2.5"/><path d="M144 5 l5.4 -4.0" stroke="#1a2016" stroke-width="1.8"/><path d="M182 101 l6.4 -0.9" stroke="#6a3a1c" stroke-width="1.7"/><path d="M70 35 l4.8 -4.8" stroke="#c8702a" stroke-width="1.6"/><path d="M117 1 l4.2 -2.5" stroke="#d87a28" stroke-width="2.5"/><path d="M101 31 l4.8 -0.1" stroke="#1f2a1a" stroke-width="3.1"/><path d="M66 93 l9.8 2.0" stroke="#8a4a1c" stroke-width="1.9"/><path d="M186 16 l10.4 1.2" stroke="#1a2016" stroke-width="3.0"/><path d="M147 53 l10.5 -3.2" stroke="#1f2a1a" stroke-width="1.5"/><path d="M119 52 l11.6 3.2" stroke="#4a5a30" stroke-width="2.7"/><path d="M159 74 l9.4 4.4" stroke="#2c3a22" stroke-width="1.3"/><path d="M63 38 l9.0 -8.5" stroke="#1f2a1a" stroke-width="1.3"/><path d="M47 55 l5.6 -3.5" stroke="#3a2a1a" stroke-width="3.0"/><path d="M152 52 l10.5 -1.6" stroke="#2c3a22" stroke-width="2.8"/><path d="M112 84 l6.1 1.8" stroke="#8a4a1c" stroke-width="1.7"/><path d="M151 101 l7.7 -1.6" stroke="#3a2a1a" stroke-width="3.2"/><path d="M85 5 l6.0 -0.1" stroke="#7a5a2a" stroke-width="1.5"/><path d="M81 77 l8.6 -4.4" stroke="#1a2016" stroke-width="2.3"/><path d="M114 101 l4.5 -4.3" stroke="#3a2a1a" stroke-width="1.8"/><path d="M118 48 l5.0 -1.3" stroke="#1f2a1a" stroke-width="1.6"/><path d="M185 97 l5.5 -6.6" stroke="#4a5a30" stroke-width="2.3"/><path d="M187 103 l12.3 -4.6" stroke="#3c4a2a" stroke-width="1.4"/><path d="M57 78 l6.5 -3.9" stroke="#7a5a2a" stroke-width="3.0"/><path d="M117 92 l6.3 0.5" stroke="#3a2a1a" stroke-width="2.1"/><path d="M67 99 l8.0 0.4" stroke="#e08a30" stroke-width="1.5"/><path d="M94 33 l3.9 1.1" stroke="#8a4a1c" stroke-width="1.9"/><path d="M101 98 l3.3 -2.4" stroke="#e08a30" stroke-width="1.8"/><path d="M98 41 l8.7 4.7" stroke="#b4601f" stroke-width="3.2"/><path d="M153 89 l3.9 -2.2" stroke="#c8702a" stroke-width="1.8"/><path d="M179 26 l7.9 -4.6" stroke="#3c4a2a" stroke-width="2.9"/><path d="M157 44 l7.6 -8.8" stroke="#d87a28" stroke-width="3.2"/><path d="M179 57 l4.5 0.5" stroke="#e08a30" stroke-width="2.1"/><path d="M133 14 l8.4 2.8" stroke="#1f2a1a" stroke-width="1.5"/><path d="M112 36 l10.1 -5.3" stroke="#c8702a" stroke-width="1.8"/><path d="M138 31 l7.9 -0.9" stroke="#15180f" stroke-width="2.6"/><path d="M55 52 l9.2 2.2" stroke="#3a2a1a" stroke-width="3.2"/><path d="M187 47 l4.5 -3.8" stroke="#2c3a22" stroke-width="1.6"/><path d="M124 33 l11.2 -4.5" stroke="#3c4a2a" stroke-width="3.2"/><path d="M152 43 l8.8 -2.9" stroke="#d87a28" stroke-width="1.8"/><path d="M152 52 l7.6 -0.7" stroke="#c8702a" stroke-width="2.3"/><path d="M135 90 l5.5 -3.8" stroke="#3c4a2a" stroke-width="2.0"/><path d="M137 45 l10.9 -5.4" stroke="#1a2016" stroke-width="1.5"/><path d="M105 79 l13.3 3.1" stroke="#3a2a1a" stroke-width="1.2"/><path d="M100 96 l12.1 3.2" stroke="#3a2a1a" stroke-width="1.7"/><path d="M60 16 l10.7 -1.8" stroke="#4a5a30" stroke-width="2.8"/><path d="M137 80 l9.2 -2.4" stroke="#1a2016" stroke-width="1.2"/><path d="M62 59 l7.4 -8.4" stroke="#15180f" stroke-width="2.6"/><path d="M120 45 l4.9 0.8" stroke="#6a3a1c" stroke-width="2.4"/><path d="M128 40 l8.3 -5.5" stroke="#1a2016" stroke-width="2.4"/><path d="M187 29 l11.1 -5.5" stroke="#3c4a2a" stroke-width="2.2"/><path d="M78 26 l10.0 4.8" stroke="#6a3a1c" stroke-width="1.3"/><path d="M72 92 l4.8 0.0" stroke="#3c4a2a" stroke-width="2.7"/><path d="M177 24 l4.9 -5.6" stroke="#d87a28" stroke-width="2.0"/><path d="M101 1 l11.0 -5.9" stroke="#2c3a22" stroke-width="1.7"/><path d="M184 32 l6.1 1.5" stroke="#3c4a2a" stroke-width="1.8"/><path d="M172 11 l10.1 -0.3" stroke="#3c4a2a" stroke-width="2.3"/><path d="M175 6 l13.2 -0.9" stroke="#1a2016" stroke-width="1.7"/><path d="M184 15 l3.1 -3.4" stroke="#d87a28" stroke-width="2.2"/><path d="M147 33 l3.5 -3.2" stroke="#15180f" stroke-width="1.9"/><path d="M71 97 l4.3 0.6" stroke="#c8702a" stroke-width="2.8"/><path d="M165 102 l4.9 -1.4" stroke="#2c3a22" stroke-width="1.8"/><path d="M95 99 l10.2 -9.1" stroke="#3c4a2a" stroke-width="2.0"/><path d="M155 32 l4.8 1.1" stroke="#e08a30" stroke-width="2.2"/><path d="M98 96 l6.2 -4.5" stroke="#3a2a1a" stroke-width="1.3"/><path d="M103 84 l4.3 0.8" stroke="#1a2016" stroke-width="2.2"/><path d="M160 6 l3.7 -2.7" stroke="#7a5a2a" stroke-width="1.9"/><path d="M83 100 l6.6 -0.2" stroke="#e08a30" stroke-width="2.7"/><path d="M177 31 l9.9 1.1" stroke="#8a4a1c" stroke-width="2.6"/><path d="M180 3 l7.4 -4.7" stroke="#3a2a1a" stroke-width="3.3"/><path d="M100 26 l8.5 -2.6" stroke="#3a2a1a" stroke-width="1.6"/><path d="M160 77 l11.4 2.9" stroke="#7a5a2a" stroke-width="1.7"/><path d="M168 48 l9.8 2.0" stroke="#1f2a1a" stroke-width="1.6"/><path d="M152 26 l3.0 -3.1" stroke="#1f2a1a" stroke-width="2.4"/><path d="M67 44 l3.4 -3.2" stroke="#7a5a2a" stroke-width="1.4"/><path d="M58 52 l8.4 0.8" stroke="#3c4a2a" stroke-width="1.5"/><path d="M110 93 l7.9 -5.1" stroke="#8a4a1c" stroke-width="2.7"/><path d="M61 87 l8.5 -4.5" stroke="#b4601f" stroke-width="1.8"/><path d="M81 46 l5.1 -3.8" stroke="#6a3a1c" stroke-width="3.1"/><path d="M127 34 l13.1 -4.7" stroke="#1f2a1a" stroke-width="2.4"/><path d="M138 10 l4.2 -1.1" stroke="#1a2016" stroke-width="2.2"/><path d="M162 87 l4.1 1.6" stroke="#6a3a1c" stroke-width="1.7"/><path d="M51 62 l5.7 1.5" stroke="#2c3a22" stroke-width="2.0"/><path d="M169 47 l10.1 -6.0" stroke="#1a2016" stroke-width="1.4"/><path d="M130 64 l6.4 -4.3" stroke="#15180f" stroke-width="1.3"/><path d="M188 4 l13.0 1.6" stroke="#4a5a30" stroke-width="1.2"/><path d="M91 71 l5.7 -4.3" stroke="#3c4a2a" stroke-width="1.3"/><path d="M115 50 l11.3 -3.9" stroke="#c8702a" stroke-width="2.4"/><path d="M136 9 l8.6 -6.8" stroke="#d87a28" stroke-width="3.4"/><path d="M140 43 l7.7 -8.4" stroke="#b4601f" stroke-width="2.1"/><path d="M47 80 l10.2 2.3" stroke="#d87a28" stroke-width="2.8"/><path d="M73 1 l7.7 2.9" stroke="#4a5a30" stroke-width="1.4"/><path d="M127 38 l5.2 1.0" stroke="#1a2016" stroke-width="2.4"/><path d="M136 95 l7.3 -7.2" stroke="#b4601f" stroke-width="2.8"/><path d="M69 36 l4.5 -3.6" stroke="#2c3a22" stroke-width="1.4"/><path d="M115 84 l5.4 2.6" stroke="#15180f" stroke-width="3.0"/><path d="M50 95 l9.0 -4.5" stroke="#c8702a" stroke-width="2.1"/><path d="M174 65 l5.4 1.4" stroke="#8a4a1c" stroke-width="3.1"/><path d="M133 64 l7.1 -5.1" stroke="#7a5a2a" stroke-width="1.7"/><path d="M102 54 l4.9 -1.9" stroke="#3c4a2a" stroke-width="3.3"/><path d="M161 20 l11.7 4.1" stroke="#c8702a" stroke-width="1.3"/><path d="M165 12 l9.5 -0.6" stroke="#c8702a" stroke-width="2.9"/><path d="M137 32 l6.7 -4.1" stroke="#b4601f" stroke-width="2.2"/><path d="M107 2 l8.9 -0.3" stroke="#3c4a2a" stroke-width="2.2"/><path d="M133 85 l11.7 3.2" stroke="#d87a28" stroke-width="1.4"/><path d="M62 45 l6.0 -5.9" stroke="#1f2a1a" stroke-width="2.6"/><path d="M50 14 l6.6 2.7" stroke="#e08a30" stroke-width="2.3"/><path d="M52 52 l12.6 -4.9" stroke="#15180f" stroke-width="1.3"/><path d="M54 64 l5.1 0.4" stroke="#15180f" stroke-width="3.4"/><path d="M115 99 l5.2 2.1" stroke="#8a4a1c" stroke-width="2.8"/><path d="M76 87 l6.5 -0.3" stroke="#b4601f" stroke-width="3.2"/><path d="M84 85 l6.9 -5.8" stroke="#3a2a1a" stroke-width="1.7"/><path d="M82 53 l3.9 -1.9" stroke="#15180f" stroke-width="2.1"/><path d="M136 29 l7.0 -3.3" stroke="#8a4a1c" stroke-width="2.9"/><path d="M61 55 l7.6 -0.1" stroke="#4a5a30" stroke-width="2.2"/><path d="M119 72 l6.1 2.3" stroke="#1f2a1a" stroke-width="2.6"/><path d="M101 83 l12.0 -7.0" stroke="#7a5a2a" stroke-width="1.5"/><path d="M92 8 l8.5 -5.5" stroke="#1a2016" stroke-width="1.9"/><path d="M118 32 l11.4 5.6" stroke="#c8702a" stroke-width="3.2"/><path d="M150 78 l5.7 -3.8" stroke="#c8702a" stroke-width="2.2"/><path d="M118 93 l4.7 -4.1" stroke="#c8702a" stroke-width="1.3"/><path d="M52 59 l8.2 -4.2" stroke="#1f2a1a" stroke-width="1.7"/><path d="M128 61 l8.4 -5.9" stroke="#3a2a1a" stroke-width="1.5"/><path d="M46 83 l8.5 0.8" stroke="#2c3a22" stroke-width="2.6"/><path d="M169 81 l6.3 -2.2" stroke="#1a2016" stroke-width="1.3"/><path d="M162 93 l9.8 -0.7" stroke="#7a5a2a" stroke-width="3.3"/><path d="M150 26 l4.1 1.6" stroke="#1f2a1a" stroke-width="1.3"/><path d="M71 17 l4.7 1.9" stroke="#7a5a2a" stroke-width="2.4"/><path d="M179 15 l8.2 -5.9" stroke="#1f2a1a" stroke-width="2.6"/><path d="M104 64 l4.6 -0.9" stroke="#c8702a" stroke-width="1.3"/><path d="M172 81 l4.0 0.4" stroke="#4a5a30" stroke-width="2.2"/><path d="M175 8 l5.8 0.1" stroke="#2c3a22" stroke-width="1.8"/><path d="M137 13 l12.5 4.5" stroke="#4a5a30" stroke-width="1.8"/><path d="M52 66 l10.8 0.6" stroke="#1f2a1a" stroke-width="3.3"/><path d="M87 97 l4.6 1.7" stroke="#1f2a1a" stroke-width="1.2"/><path d="M81 25 l13.3 1.9" stroke="#e08a30" stroke-width="3.2"/><path d="M72 40 l7.8 -0.5" stroke="#4a5a30" stroke-width="2.6"/><path d="M144 69 l7.7 3.9" stroke="#4a5a30" stroke-width="2.4"/><path d="M45 3 l5.7 2.7" stroke="#6a3a1c" stroke-width="2.9"/><path d="M100 61 l5.7 -0.6" stroke="#1a2016" stroke-width="1.3"/><path d="M59 97 l5.0 -2.2" stroke="#1a2016" stroke-width="1.3"/><path d="M64 67 l3.1 -3.5" stroke="#1a2016" stroke-width="1.3"/><path d="M129 38 l11.8 3.0" stroke="#c8702a" stroke-width="1.3"/><path d="M169 95 l4.6 2.1" stroke="#3c4a2a" stroke-width="1.6"/><path d="M49 99 l10.7 4.2" stroke="#2c3a22" stroke-width="3.0"/><path d="M135 30 l3.6 -3.4" stroke="#8a4a1c" stroke-width="2.6"/><path d="M86 35 l6.5 -3.8" stroke="#6a3a1c" stroke-width="1.3"/><path d="M153 95 l9.9 1.8" stroke="#3a2a1a" stroke-width="3.1"/><path d="M133 3 l7.9 -2.6" stroke="#8a4a1c" stroke-width="1.4"/><path d="M112 5 l11.1 -1.2" stroke="#4a5a30" stroke-width="1.4"/><path d="M162 18 l3.8 -4.7" stroke="#8a4a1c" stroke-width="2.9"/><path d="M52 36 l7.9 -7.6" stroke="#4a5a30" stroke-width="1.6"/><path d="M115 36 l6.4 1.7" stroke="#15180f" stroke-width="1.8"/><path d="M75 73 l5.0 -1.0" stroke="#c8702a" stroke-width="2.9"/><path d="M115 103 l5.0 -0.6" stroke="#b4601f" stroke-width="2.0"/><path d="M102 41 l4.6 1.7" stroke="#c8702a" stroke-width="1.3"/><path d="M74 27 l8.4 3.2" stroke="#d87a28" stroke-width="3.4"/><path d="M135 98 l7.5 -6.6" stroke="#e08a30" stroke-width="2.9"/><path d="M137 36 l5.0 -2.4" stroke="#4a5a30" stroke-width="2.2"/><path d="M124 34 l10.5 -2.7" stroke="#6a3a1c" stroke-width="2.5"/><path d="M62 48 l6.0 2.1" stroke="#3c4a2a" stroke-width="1.8"/><path d="M153 86 l11.2 -0.4" stroke="#3c4a2a" stroke-width="2.8"/><path d="M131 36 l11.4 -7.3" stroke="#6a3a1c" stroke-width="3.3"/><path d="M149 11 l4.5 2.2" stroke="#d87a28" stroke-width="1.5"/><path d="M65 31 l6.0 -3.1" stroke="#2c3a22" stroke-width="2.6"/><path d="M59 21 l4.1 -1.5" stroke="#d87a28" stroke-width="3.1"/><path d="M107 23 l6.2 3.2" stroke="#1a2016" stroke-width="1.5"/><path d="M131 42 l13.0 1.8" stroke="#d87a28" stroke-width="2.7"/><path d="M129 67 l10.3 3.0" stroke="#c8702a" stroke-width="3.1"/><path d="M155 73 l10.3 3.1" stroke="#c8702a" stroke-width="1.5"/><path d="M106 27 l12.9 1.0" stroke="#3c4a2a" stroke-width="2.9"/><path d="M147 65 l7.0 -4.3" stroke="#3a2a1a" stroke-width="1.2"/><path d="M168 54 l12.7 0.3" stroke="#c8702a" stroke-width="1.9"/><path d="M46 87 l4.7 1.8" stroke="#6a3a1c" stroke-width="2.4"/><path d="M67 81 l8.4 3.7" stroke="#2c3a22" stroke-width="3.1"/><path d="M110 21 l4.0 -1.0" stroke="#8a4a1c" stroke-width="3.0"/><path d="M119 43 l5.6 2.5" stroke="#c8702a" stroke-width="1.6"/><path d="M118 97 l10.1 1.2" stroke="#c8702a" stroke-width="1.3"/><path d="M84 42 l5.2 -6.3" stroke="#d87a28" stroke-width="2.6"/><path d="M141 60 l5.2 -4.8" stroke="#d87a28" stroke-width="3.3"/><path d="M120 23 l7.7 1.7" stroke="#3c4a2a" stroke-width="1.6"/><path d="M178 7 l5.8 1.3" stroke="#c8702a" stroke-width="2.4"/><path d="M77 100 l9.5 -4.1" stroke="#4a5a30" stroke-width="2.9"/><path d="M104 104 l10.4 1.7" stroke="#8a4a1c" stroke-width="3.0"/><path d="M95 88 l6.7 -3.9" stroke="#6a3a1c" stroke-width="3.4"/><path d="M142 50 l11.7 2.7" stroke="#b4601f" stroke-width="1.7"/><path d="M87 50 l9.9 -3.1" stroke="#c8702a" stroke-width="3.2"/><path d="M66 32 l4.5 -1.7" stroke="#7a5a2a" stroke-width="3.2"/><path d="M157 15 l10.0 2.7" stroke="#1a2016" stroke-width="2.6"/><path d="M74 7 l8.9 -4.7" stroke="#7a5a2a" stroke-width="1.5"/><path d="M78 81 l5.1 -2.2" stroke="#d87a28" stroke-width="2.9"/><path d="M68 93 l11.8 -0.6" stroke="#c8702a" stroke-width="3.2"/><path d="M123 66 l7.9 -4.2" stroke="#3c4a2a" stroke-width="2.4"/><path d="M151 46 l9.0 3.1" stroke="#6a3a1c" stroke-width="2.1"/><path d="M163 49 l8.8 -1.1" stroke="#15180f" stroke-width="2.7"/><path d="M80 17 l11.3 -0.7" stroke="#15180f" stroke-width="3.0"/><path d="M111 59 l12.4 0.4" stroke="#b4601f" stroke-width="2.1"/><path d="M188 70 l6.1 -4.6" stroke="#c8702a" stroke-width="1.3"/><path d="M132 71 l6.7 2.9" stroke="#2c3a22" stroke-width="2.3"/><path d="M114 93 l7.4 -8.4" stroke="#c8702a" stroke-width="1.5"/><path d="M58 69 l10.8 -4.8" stroke="#1f2a1a" stroke-width="2.9"/><path d="M74 45 l9.1 -2.9" stroke="#4a5a30" stroke-width="1.8"/><path d="M95 51 l12.6 -5.8" stroke="#4a5a30" stroke-width="2.3"/><path d="M184 68 l7.2 1.5" stroke="#b4601f" stroke-width="2.8"/><path d="M62 101 l10.0 -9.8" stroke="#d87a28" stroke-width="2.8"/><path d="M172 57 l4.7 -5.2" stroke="#1a2016" stroke-width="1.3"/><path d="M162 49 l4.5 0.8" stroke="#1f2a1a" stroke-width="3.2"/><path d="M132 64 l11.0 -0.2" stroke="#7a5a2a" stroke-width="3.1"/><path d="M56 4 l10.3 -0.1" stroke="#15180f" stroke-width="1.4"/><path d="M70 4 l12.9 2.4" stroke="#c8702a" stroke-width="1.2"/><path d="M170 14 l9.9 -5.0" stroke="#4a5a30" stroke-width="1.9"/><path d="M105 33 l10.0 -3.0" stroke="#1a2016" stroke-width="2.3"/><path d="M119 86 l8.1 1.5" stroke="#e08a30" stroke-width="3.2"/><path d="M108 1 l9.3 -3.5" stroke="#c8702a" stroke-width="3.4"/><path d="M112 43 l7.6 -7.2" stroke="#3c4a2a" stroke-width="3.2"/><path d="M134 44 l6.8 -8.3" stroke="#4a5a30" stroke-width="1.4"/><path d="M169 13 l7.2 -8.6" stroke="#3c4a2a" stroke-width="2.2"/><path d="M151 96 l10.6 -4.3" stroke="#e08a30" stroke-width="3.1"/><path d="M149 9 l11.1 -0.2" stroke="#3a2a1a" stroke-width="2.7"/></g><path d="M150 0 H184 L190 40 Q176 52 160 44 Q148 30 150 0Z" fill="#c8782c" filter="url(#b1)"/><g filter="url(#b0)"><path d="M40 2 Q55 -3 80 2 Q84 10 76 18 Q60 22 46 16 Q38 10 40 2Z" fill="#d88632"/><path d="M150 18 Q168 10 184 22 Q190 36 180 46 Q165 50 152 42 Q144 30 150 18Z" fill="#c87428"/><path d="M41 58 Q52 46 78 50 Q100 52 114 62 Q112 76 92 78 Q62 80 44 72 Q38 66 41 58Z" fill="#ec8e30"/><path d="M74 56 Q92 52 106 60 Q100 70 84 70 Q74 66 74 56Z" fill="#f2c078"/><path d="M50 80 Q66 76 82 84 Q88 98 80 108 Q66 114 54 106 Q46 94 50 80Z" fill="#ee9236"/><path d="M56 84 Q68 82 74 92 Q70 100 60 98 Q54 92 56 84Z" fill="#ecd0a8"/><path d="M118 72 Q140 58 176 62 Q192 70 186 84 Q168 100 140 98 Q118 92 118 72Z" fill="#e2862a"/><path d="M126 78 Q150 70 172 74 Q176 84 160 90 Q138 92 126 78Z" fill="#f0a040"/><path d="M52 52 L50 74" stroke="#a8501c" stroke-width="1.1" opacity="0.7"/><path d="M60 50 L59 77" stroke="#a8501c" stroke-width="1.1" opacity="0.7"/><path d="M68 49 L68 78" stroke="#a8501c" stroke-width="1.1" opacity="0.7"/><path d="M124 70 L128 94" stroke="#a8501c" stroke-width="1.1" opacity="0.7"/><path d="M134 66 L138 97" stroke="#a8501c" stroke-width="1.1" opacity="0.7"/><path d="M146 63 L150 98" stroke="#a8501c" stroke-width="1.1" opacity="0.7"/><path d="M158 62 L162 96" stroke="#a8501c" stroke-width="1.1" opacity="0.7"/><path d="M54 84 L52 104" stroke="#a8501c" stroke-width="1.1" opacity="0.7"/><path d="M62 80 L60 110" stroke="#a8501c" stroke-width="1.1" opacity="0.7"/><path d="M70 82 L70 112" stroke="#a8501c" stroke-width="1.1" opacity="0.7"/><ellipse cx="60" cy="60" rx="8" ry="4" fill="#5a3418" opacity="0.55"/><ellipse cx="90" cy="72" rx="10" ry="3" fill="#5a3418" opacity="0.55"/><ellipse cx="140" cy="88" rx="12" ry="4" fill="#5a3418" opacity="0.55"/><ellipse cx="170" cy="70" rx="8" ry="5" fill="#5a3418" opacity="0.55"/><ellipse cx="66" cy="100" rx="8" ry="4" fill="#5a3418" opacity="0.55"/><ellipse cx="52" cy="8" rx="8" ry="4" fill="#5a3418" opacity="0.55"/><ellipse cx="168" cy="30" rx="10" ry="6" fill="#5a3418" opacity="0.55"/></g><g fill="none" stroke-linecap="round" filter="url(#b0)"><path d="M78 36 L86 2" stroke="#e07a28" stroke-width="4"/><path d="M112 60 L144 2" stroke="#e8952a" stroke-width="3.4"/><path d="M126 36 L182 12" stroke="#e07030" stroke-width="3"/><path d="M110 58 L128 28" stroke="#e8a030" stroke-width="3.2"/><path d="M66 40 L72 4" stroke="#4a5a3a" stroke-width="2"/><path d="M118 62 L190 52" stroke="#c86a28" stroke-width="1.2"/><path d="M116 66 L200 64" stroke="#d87a40" stroke-width="1"/><path d="M100 92 L120 110" stroke="#c8703a" stroke-width="1.1"/><path d="M88 102 L128 96" stroke="#d88040" stroke-width="1"/><path d="M120 50 L176 32" stroke="#c06428" stroke-width="1.2"/><path d="M60 30 L120 20" stroke="#7a4a28" stroke-width="1"/><path d="M96 100 L150 86" stroke="#b86830" stroke-width="1"/></g><g filter="url(#b1)"><path d="M0 18 Q10 14 18 24 Q24 50 22 76 Q26 92 20 100 Q8 98 0 90Z" fill="#a6d45c"/><path d="M0 20 Q8 18 12 30 L10 44 L0 46Z" fill="#3f7a32"/><path d="M0 74 Q20 78 40 80 Q44 92 38 98 Q30 94 26 100 Q14 92 0 92Z" fill="#c6dea0"/><path d="M16 16 Q30 8 46 14 Q58 24 52 38 Q50 50 40 50 Q26 56 18 46 Q12 30 16 16Z" fill="#e9eed8"/><path d="M22 22 Q34 18 44 26 Q44 36 34 38 Q24 34 22 22Z" fill="#f6f7ee"/><path d="M24 52 Q34 44 48 46 Q46 62 30 78 Q22 76 24 52Z" fill="#bcd890"/><path d="M23 54 Q32 46 47 45" stroke="#2f5a26" stroke-width="2.2" fill="none"/><path d="M24 70 Q28 78 32 77" stroke="#2f5a26" stroke-width="2" fill="none"/><path d="M0 72 L20 69" stroke="#8a3a9a" stroke-width="1.6"/><path d="M12 40 L18 58" stroke="#f0a030" stroke-width="1.6"/></g><rect width="219" height="159" filter="url(#nz)" opacity="0.35"/><rect width="219" height="159" filter="url(#nzw)" opacity="0.22"/><g filter="url(#b0)"><path d="M182 6 Q200 -6 219 0 L219 30 Q206 36 192 28 Q184 18 182 6Z" fill="#ebdfdc"/><path d="M186 6.0 Q204 -2.0 219 4.0" stroke="#c89a9c" stroke-width="0.9" fill="none"/><path d="M188 9.2 Q204 1.6 219 7.4" stroke="#c89a9c" stroke-width="0.9" fill="none"/><path d="M190 12.4 Q204 5.2 219 10.8" stroke="#c89a9c" stroke-width="0.9" fill="none"/><path d="M192 15.600000000000001 Q204 8.8 219 14.2" stroke="#c89a9c" stroke-width="0.9" fill="none"/><path d="M194 18.8 Q204 12.4 219 17.6" stroke="#c89a9c" stroke-width="0.9" fill="none"/><path d="M196 22.0 Q204 16.0 219 21.0" stroke="#c89a9c" stroke-width="0.9" fill="none"/><path d="M198 25.200000000000003 Q204 19.6 219 24.4" stroke="#c89a9c" stroke-width="0.9" fill="none"/><path d="M198 34 Q208 30 219 34 L219 62 Q206 62 200 54Z" fill="#f3e6e4"/></g><circle cx="200" cy="114" r="46" fill="#f6f5f3"/><circle cx="200" cy="114" r="46" fill="none" stroke="#d8d8d8" stroke-width="1"/><ellipse cx="204" cy="122" rx="33" ry="36" fill="#ece6de"/><g filter="url(#b0)"><path d="M190 86 Q204 84 219 90 L219 118 Q204 108 190 86Z" fill="#f4a816"/><path d="M182 92 Q196 92 214 122 L219 134 Q200 122 182 92Z" fill="#f2ddb4"/><path d="M168 98 Q174 90 180 96 Q196 116 204 128 Q188 126 176 116 Q168 108 168 98Z" fill="#ea9c80"/><path d="M176 96 Q184 96 204 128 L198 128 Q182 112 176 96Z" fill="#f4e2c4"/><circle cx="185" cy="130" r="11.5" fill="#6c2c34"/><circle cx="182" cy="127" r="4" fill="#8a4a52"/><circle cx="206" cy="136" r="10" fill="#c62a20"/><circle cx="204" cy="133" r="3.4" fill="#e05a48"/></g><ellipse cx="109" cy="163" rx="69" ry="50" fill="#dfe4e2"/><ellipse cx="109" cy="163" rx="69" ry="50" fill="none" stroke="#47584e" stroke-width="1.6"/><ellipse cx="110" cy="166" rx="60" ry="44" fill="#c6b2ac"/><g filter="url(#b0)"><path d="M112 124 Q150 124 166 159 L112 159Z" fill="#aeb08e"/><circle cx="153" cy="156" r="2.2" fill="#2f3c24"/><circle cx="127" cy="152" r="1.7" fill="#2f3c24"/><circle cx="90" cy="144" r="1.7" fill="#f0e6e2"/><circle cx="90" cy="157" r="1.6" fill="#f0e6e2"/><circle cx="74" cy="158" r="1.4" fill="#6a3a44"/><circle cx="126" cy="145" r="1.9" fill="#26301e"/><circle cx="141" cy="139" r="2.3" fill="#d8d8c0"/><circle cx="118" cy="133" r="2.1" fill="#2f3c24"/><circle cx="127" cy="152" r="2.4" fill="#d8d8c0"/><circle cx="72" cy="153" r="1.5" fill="#4a2a34"/><circle cx="131" cy="144" r="2.3" fill="#3e4a2c"/><circle cx="85" cy="138" r="2.1" fill="#4a2a34"/><circle cx="139" cy="151" r="2.4" fill="#d8d8c0"/><circle cx="144" cy="154" r="1.6" fill="#3e4a2c"/><circle cx="149" cy="152" r="1.7" fill="#26301e"/><circle cx="65" cy="142" r="1.2" fill="#f0e6e2"/><circle cx="138" cy="156" r="1.6" fill="#3e4a2c"/><circle cx="133" cy="156" r="2.3" fill="#2f3c24"/><circle cx="106" cy="125" r="1.9" fill="#8a5a60"/><circle cx="81" cy="143" r="2.1" fill="#8a5a60"/><circle cx="113" cy="140" r="1.2" fill="#4a2a34"/><circle cx="144" cy="133" r="1.8" fill="#d8d8c0"/><circle cx="112" cy="128" r="2.1" fill="#6a3a44"/><circle cx="110" cy="154" r="1.8" fill="#8a5a60"/><circle cx="121" cy="135" r="1.3" fill="#2f3c24"/><circle cx="78" cy="154" r="1.6" fill="#4a2a34"/><circle cx="118" cy="132" r="1.8" fill="#d8d8c0"/><circle cx="159" cy="150" r="1.6" fill="#3e4a2c"/><circle cx="62" cy="143" r="1.6" fill="#f0e6e2"/><circle cx="148" cy="155" r="2.5" fill="#26301e"/><circle cx="91" cy="131" r="2.1" fill="#6a3a44"/><circle cx="129" cy="137" r="2.4" fill="#26301e"/><circle cx="96" cy="131" r="1.2" fill="#e6d8d4"/><circle cx="159" cy="157" r="2.5" fill="#2f3c24"/><circle cx="155" cy="153" r="1.6" fill="#2f3c24"/><circle cx="112" cy="149" r="1.1" fill="#f0e6e2"/><circle cx="72" cy="150" r="1.8" fill="#e6d8d4"/><circle cx="89" cy="144" r="1.6" fill="#6a3a44"/><circle cx="97" cy="136" r="1.6" fill="#8a5a60"/><circle cx="72" cy="147" r="1.6" fill="#6a3a44"/><circle cx="155" cy="152" r="2.5" fill="#3e4a2c"/><circle cx="80" cy="157" r="2.1" fill="#8a5a60"/><circle cx="71" cy="139" r="2.1" fill="#6a3a44"/><circle cx="64" cy="158" r="2.0" fill="#8a5a60"/><circle cx="108" cy="145" r="1.4" fill="#e6d8d4"/><circle cx="136" cy="129" r="2.0" fill="#26301e"/><circle cx="72" cy="154" r="1.5" fill="#8a5a60"/><circle cx="118" cy="133" r="1.6" fill="#3e4a2c"/><circle cx="68" cy="139" r="1.1" fill="#f0e6e2"/><circle cx="154" cy="147" r="2.0" fill="#3e4a2c"/><circle cx="138" cy="158" r="2.6" fill="#26301e"/><circle cx="165" cy="156" r="1.7" fill="#2f3c24"/><circle cx="101" cy="128" r="1.2" fill="#8a5a60"/><circle cx="126" cy="138" r="1.9" fill="#d8d8c0"/><circle cx="104" cy="151" r="1.3" fill="#4a2a34"/><circle cx="101" cy="132" r="1.2" fill="#e6d8d4"/><circle cx="76" cy="151" r="1.2" fill="#e6d8d4"/><circle cx="122" cy="140" r="1.4" fill="#d8d8c0"/><circle cx="71" cy="147" r="1.7" fill="#e6d8d4"/><circle cx="136" cy="137" r="1.9" fill="#2f3c24"/><circle cx="94" cy="132" r="1.1" fill="#f0e6e2"/><circle cx="101" cy="150" r="2.0" fill="#e6d8d4"/><circle cx="85" cy="129" r="1.0" fill="#8a5a60"/><circle cx="133" cy="143" r="1.7" fill="#2f3c24"/><circle cx="158" cy="158" r="1.4" fill="#2f3c24"/><circle cx="134" cy="152" r="2.3" fill="#d8d8c0"/><circle cx="151" cy="143" r="1.6" fill="#2f3c24"/><circle cx="68" cy="149" r="1.6" fill="#f0e6e2"/><circle cx="114" cy="142" r="1.3" fill="#6a3a44"/><circle cx="66" cy="145" r="1.1" fill="#e6d8d4"/><circle cx="83" cy="152" r="1.0" fill="#6a3a44"/><circle cx="157" cy="149" r="1.2" fill="#d8d8c0"/><circle cx="121" cy="143" r="2.2" fill="#3e4a2c"/><circle cx="67" cy="154" r="1.1" fill="#e6d8d4"/><circle cx="69" cy="140" r="1.9" fill="#4a2a34"/><circle cx="152" cy="142" r="2.4" fill="#3e4a2c"/><circle cx="72" cy="143" r="1.2" fill="#f0e6e2"/><circle cx="146" cy="157" r="2.2" fill="#26301e"/><circle cx="121" cy="144" r="1.8" fill="#2f3c24"/><circle cx="159" cy="151" r="1.8" fill="#d8d8c0"/><circle cx="147" cy="148" r="2.3" fill="#d8d8c0"/><circle cx="112" cy="157" r="1.3" fill="#8a5a60"/><circle cx="102" cy="145" r="1.1" fill="#8a5a60"/><circle cx="76" cy="134" r="1.6" fill="#e6d8d4"/><circle cx="162" cy="151" r="2.1" fill="#26301e"/><circle cx="144" cy="155" r="1.2" fill="#2f3c24"/><circle cx="126" cy="132" r="2.1" fill="#d8d8c0"/><circle cx="94" cy="128" r="1.7" fill="#6a3a44"/><circle cx="85" cy="139" r="2.1" fill="#4a2a34"/><circle cx="104" cy="141" r="2.1" fill="#8a5a60"/><circle cx="119" cy="132" r="2.2" fill="#2f3c24"/><circle cx="87" cy="139" r="1.3" fill="#4a2a34"/><circle cx="98" cy="142" r="1.6" fill="#8a5a60"/><circle cx="116" cy="145" r="2.0" fill="#f0e6e2"/></g></g></svg>
<svg style="left:489px;top:362.7px;width:218.5px;height:159px;" width="219" height="159" viewBox="0 0 219 159" preserveAspectRatio="none"><defs><clipPath id="p2c"><rect width="219" height="159" rx="8"/></clipPath><filter id="c0" x="-10%" y="-10%" width="120%" height="120%"><feGaussianBlur stdDeviation="0.6"/></filter><filter id="c1" x="-10%" y="-10%" width="120%" height="120%"><feGaussianBlur stdDeviation="1.4"/></filter><linearGradient id="door" x1="0" y1="0" x2="0" y2="1"><stop offset="0" stop-color="#8c8a6c"/><stop offset="0.35" stop-color="#5e6250"/><stop offset="0.6" stop-color="#34383a"/><stop offset="1" stop-color="#5c554a"/></linearGradient></defs><g clip-path="url(#p2c)"><rect width="219" height="159" fill="#22282c"/><rect x="0" y="0" width="219" height="37" fill="#a8aab0"/><rect x="0" y="0" width="66" height="37" fill="#a2a4aa"/><rect x="134" y="0" width="69" height="37" fill="#acaeb4"/><rect x="65.5" y="0" width="1" height="37" fill="#b8bac0"/><rect x="133.5" y="0" width="1" height="37" fill="#b8bac0"/><rect x="202.5" y="0" width="17" height="60" fill="#8e8e84"/><rect x="213" y="0" width="6" height="40" fill="#3a4a3a" opacity="0.5"/><text x="58" y="19.8" font-family="'Liberation Sans',sans-serif" font-size="19" fill="#ececee" letter-spacing="4.6" filter="url(#c0)">101</text><text transform="translate(111.5 19.4) scale(1.3 1)" font-family="'Noto Serif CJK SC','Noto Sans CJK SC',serif" font-weight="700" font-size="15.5" fill="#ececee" letter-spacing="3.4" filter="url(#c0)">茶餐廳</text><rect x="0" y="37" width="219" height="2.6" fill="#2c2e32"/><rect x="0" y="39.6" width="219" height="4.6" fill="#c4c8cc"/><path d="M0 44 H219 L219.0 53.4 L203.4 55.6 L187.7 54.1 L172.1 56.3 L156.4 54.8 L140.8 57.0 L125.1 55.5 L109.5 57.7 L93.9 56.3 L78.2 58.4 L62.6 57.0 L46.9 59.1 L31.3 57.7 L15.6 59.8 L0.0 58.4 Z" fill="#e6e8ec"/><path d="M0 46 H219" stroke="#d0d4d8" stroke-width="1.4"/><rect x="0" y="58" width="7" height="101" fill="#b4b4b2"/><g filter="url(#c1)"><ellipse cx="6" cy="106" rx="8" ry="26" fill="#3c5e3c"/><ellipse cx="4" cy="96" rx="5" ry="10" fill="#577a4e"/></g><rect x="22" y="61" width="64" height="78" fill="#283034"/><rect x="22" y="61" width="1.6" height="76" fill="#c8c8c8"/><rect x="29.4" y="66" width="47.5" height="67" fill="url(#door)"/><g filter="url(#c1)"><ellipse cx="42" cy="72" rx="9" ry="4" fill="#b8a040"/><ellipse cx="56" cy="70" rx="7" ry="3.5" fill="#c85a30"/><ellipse cx="66" cy="76" rx="8" ry="5" fill="#6a8a50"/><rect x="50" y="80" width="10" height="12" fill="#c8b850"/><rect x="66" y="84" width="6" height="8" fill="#3a9a4a"/><ellipse cx="40" cy="95" rx="6" ry="5" fill="#e8e8e0"/><rect x="30" y="96" width="46" height="22" fill="#2a2e2c" opacity="0.75"/><rect x="28.5" y="102" width="8" height="30" fill="#b87a38"/><rect x="36" y="120" width="40" height="12" fill="#6a6258"/></g><rect x="86" y="66" width="16" height="42" fill="#38423e"/><circle cx="91" cy="82" r="4.5" fill="#8aa09a" opacity="0.7" filter="url(#c1)"/><rect x="85" y="108" width="17" height="24" fill="#cac6ba"/><rect x="98" y="61" width="5.5" height="50" fill="#283034"/><rect x="104" y="65" width="25.5" height="42" fill="#3c3c36"/><g filter="url(#c0)"><rect x="104" y="65" width="25.5" height="5" fill="#7a6a50"/><path d="M105 80 Q112 72 124 76 L128 86 Q120 98 108 100 Q104 92 105 80Z" fill="#eaeaea"/><ellipse cx="117" cy="84" rx="7" ry="4" fill="#202020" transform="rotate(-20 117 84)"/><ellipse cx="110" cy="97" rx="6" ry="5" fill="#1c1c1c"/><rect x="106" y="101.5" width="22" height="1.4" fill="#d8b888"/></g><rect x="104" y="108" width="25.5" height="6" fill="#2a7a82"/><rect x="104" y="114" width="25.5" height="20" fill="#d2cec2"/><rect x="129.5" y="61" width="2.4" height="76" fill="#283034"/><rect x="132" y="65" width="45" height="13" fill="#dedede"/><rect x="132" y="78" width="45" height="28" fill="#b4703c"/><rect x="132" y="78" width="45" height="3" fill="#8a6a50"/><rect x="132" y="89.6" width="45" height="2" fill="#3a3a3a"/><rect x="148" y="92" width="28" height="13" fill="#c87a3c"/><rect x="134" y="93.5" width="14.5" height="11.5" rx="2" fill="#e8e6e0"/><circle cx="141" cy="99" r="4.2" fill="#3a3a3a"/><circle cx="141" cy="99" r="2" fill="#d0d0d0"/><rect x="151" y="95" width="5" height="8" fill="#d83a28"/><rect x="132" y="105.6" width="49" height="2" fill="#dcae70"/><rect x="132" y="108" width="45" height="19" fill="#6c6a68"/><rect x="139.5" y="108" width="0.7" height="19" fill="#4a4846"/><rect x="147.0" y="108" width="0.7" height="19" fill="#4a4846"/><rect x="154.5" y="108" width="0.7" height="19" fill="#4a4846"/><rect x="162.0" y="108" width="0.7" height="19" fill="#4a4846"/><rect x="169.5" y="108" width="0.7" height="19" fill="#4a4846"/><rect x="132" y="112.8" width="45" height="0.7" fill="#4a4846"/><rect x="132" y="117.6" width="45" height="0.7" fill="#4a4846"/><rect x="132" y="122.4" width="45" height="0.7" fill="#4a4846"/><rect x="177" y="61" width="7.5" height="80" fill="#262e32"/><rect x="184.5" y="55" width="11" height="104" fill="#9c9c92"/><rect x="195.5" y="55" width="24" height="104" fill="#a4a39c"/><rect x="184.5" y="107" width="35" height="2" fill="#c0bfb8"/><rect x="196.7" y="74" width="19" height="9.6" fill="#eaa82e"/><rect x="199" y="79.5" width="14" height="1" fill="#b87a20"/><rect x="0" y="137.5" width="219" height="22" fill="#8e8e8c"/><rect x="4" y="138" width="76" height="11" fill="#84847f"/><rect x="0" y="149" width="219" height="10" fill="#9c9c9c"/><rect x="100" y="150" width="119" height="9" fill="#b0b0b0"/><rect x="94.7" y="112.7" width="25" height="20.2" fill="#caa070"/><rect x="95.5" y="113.6" width="23.4" height="5.6" fill="#e8a24e"/><rect x="95.5" y="121" width="23.4" height="0.8" fill="#a07a50"/><rect x="79" y="139" width="41" height="13.5" fill="#98785a"/><rect x="81.0" y="139" width="0.8" height="13.5" fill="#7a5e44"/><rect x="85.4" y="139" width="0.8" height="13.5" fill="#7a5e44"/><rect x="89.8" y="139" width="0.8" height="13.5" fill="#7a5e44"/><rect x="94.2" y="139" width="0.8" height="13.5" fill="#7a5e44"/><rect x="98.6" y="139" width="0.8" height="13.5" fill="#7a5e44"/><rect x="103.0" y="139" width="0.8" height="13.5" fill="#7a5e44"/><rect x="107.4" y="139" width="0.8" height="13.5" fill="#7a5e44"/><rect x="111.80000000000001" y="139" width="0.8" height="13.5" fill="#7a5e44"/><rect x="116.2" y="139" width="0.8" height="13.5" fill="#7a5e44"/><rect x="120" y="143" width="19" height="9" fill="#8c8e92"/><rect x="152" y="143" width="29" height="10" fill="#86888c"/><rect x="152" y="131" width="29" height="6" fill="#8e7a64"/><rect x="195" y="141" width="24" height="13" fill="#a2a6aa"/><g filter="url(#c0)"><circle cx="125" cy="137" r="1.8" fill="#274828"/><circle cx="167" cy="129" r="1.9" fill="#6a9a5e"/><circle cx="142" cy="129" r="1.6" fill="#274828"/><circle cx="87" cy="142" r="2.0" fill="#3c6a3a"/><circle cx="119" cy="135" r="2.1" fill="#6a9a5e"/><circle cx="143" cy="142" r="1.3" fill="#3c6a3a"/><circle cx="81" cy="135" r="2.0" fill="#274828"/><circle cx="87" cy="139" r="2.6" fill="#274828"/><circle cx="182" cy="143" r="1.6" fill="#5a8a52"/><circle cx="102" cy="131" r="2.0" fill="#3c6a3a"/><circle cx="80" cy="139" r="1.5" fill="#2c5230"/><circle cx="173" cy="135" r="1.8" fill="#274828"/><circle cx="137" cy="129" r="1.7" fill="#5a8a52"/><circle cx="121" cy="144" r="1.5" fill="#2c5230"/><circle cx="161" cy="129" r="1.5" fill="#6a9a5e"/><circle cx="131" cy="146" r="1.8" fill="#2c5230"/><circle cx="118" cy="133" r="1.2" fill="#2c5230"/><circle cx="168" cy="145" r="1.6" fill="#6a9a5e"/><circle cx="170" cy="129" r="2.6" fill="#274828"/><circle cx="141" cy="137" r="2.6" fill="#3c6a3a"/><circle cx="158" cy="132" r="1.7" fill="#5a8a52"/><circle cx="144" cy="125" r="1.7" fill="#5a8a52"/><circle cx="125" cy="145" r="2.4" fill="#274828"/><circle cx="92" cy="133" r="1.6" fill="#2c5230"/><circle cx="102" cy="138" r="1.4" fill="#2c5230"/><circle cx="143" cy="137" r="2.4" fill="#274828"/><circle cx="141" cy="134" r="1.4" fill="#3c6a3a"/><circle cx="131" cy="130" r="1.6" fill="#274828"/><circle cx="164" cy="138" r="1.9" fill="#5a8a52"/><circle cx="175" cy="146" r="1.5" fill="#2c5230"/><circle cx="136" cy="143" r="1.3" fill="#6a9a5e"/><circle cx="100" cy="144" r="1.3" fill="#3c6a3a"/><circle cx="133" cy="145" r="1.7" fill="#3c6a3a"/><circle cx="171" cy="146" r="2.0" fill="#6a9a5e"/><circle cx="80" cy="144" r="2.5" fill="#5a8a52"/><circle cx="80" cy="138" r="1.3" fill="#274828"/><circle cx="86" cy="135" r="2.2" fill="#5a8a52"/><circle cx="172" cy="140" r="2.3" fill="#2c5230"/><circle cx="173" cy="132" r="2.5" fill="#274828"/><circle cx="169" cy="134" r="2.4" fill="#3c6a3a"/><circle cx="138" cy="138" r="1.7" fill="#274828"/><circle cx="105" cy="134" r="1.7" fill="#5a8a52"/><circle cx="154" cy="137" r="1.8" fill="#274828"/><circle cx="134" cy="136" r="1.2" fill="#6a9a5e"/><circle cx="141" cy="135" r="2.5" fill="#2c5230"/><circle cx="90" cy="141" r="1.6" fill="#274828"/><circle cx="79" cy="131" r="1.5" fill="#6a9a5e"/><circle cx="96" cy="144" r="1.9" fill="#274828"/><circle cx="103" cy="133" r="1.5" fill="#5a8a52"/><circle cx="123" cy="142" r="2.4" fill="#2c5230"/><circle cx="118" cy="137" r="1.5" fill="#5a8a52"/><circle cx="92" cy="132" r="2.2" fill="#3c6a3a"/><circle cx="177" cy="131" r="1.4" fill="#2c5230"/><circle cx="127" cy="144" r="1.7" fill="#274828"/><circle cx="132" cy="139" r="1.8" fill="#6a9a5e"/><circle cx="169" cy="126" r="2.0" fill="#5a8a52"/><circle cx="110" cy="142" r="2.1" fill="#3c6a3a"/><circle cx="158" cy="131" r="2.3" fill="#2c5230"/><circle cx="180" cy="127" r="2.1" fill="#3c6a3a"/><circle cx="146" cy="142" r="2.2" fill="#3c6a3a"/><circle cx="99" cy="135" r="2.2" fill="#2c5230"/><circle cx="157" cy="136" r="1.5" fill="#3c6a3a"/><circle cx="106" cy="132" r="1.9" fill="#6a9a5e"/><circle cx="182" cy="128" r="1.3" fill="#2c5230"/><circle cx="175" cy="140" r="1.8" fill="#2c5230"/><circle cx="98" cy="144" r="1.7" fill="#3c6a3a"/><circle cx="137" cy="143" r="1.8" fill="#5a8a52"/><circle cx="146" cy="129" r="1.5" fill="#3c6a3a"/><circle cx="172" cy="146" r="2.0" fill="#5a8a52"/><circle cx="160" cy="132" r="1.7" fill="#3c6a3a"/><circle cx="87" cy="134" r="1.8" fill="#6a9a5e"/><circle cx="107" cy="144" r="2.3" fill="#2c5230"/><circle cx="85" cy="142" r="1.9" fill="#2c5230"/><circle cx="149" cy="144" r="1.4" fill="#274828"/><circle cx="132" cy="140" r="2.5" fill="#274828"/><circle cx="129" cy="145" r="2.3" fill="#3c6a3a"/><circle cx="124" cy="137" r="2.1" fill="#6a9a5e"/><circle cx="132" cy="143" r="1.6" fill="#6a9a5e"/><circle cx="148" cy="145" r="1.5" fill="#6a9a5e"/><circle cx="166" cy="145" r="1.6" fill="#6a9a5e"/><circle cx="130" cy="134" r="1.9" fill="#3c6a3a"/><circle cx="141" cy="126" r="1.9" fill="#3c6a3a"/><circle cx="120" cy="142" r="1.4" fill="#6a9a5e"/><circle cx="175" cy="135" r="1.6" fill="#274828"/><circle cx="127" cy="128" r="2.5" fill="#274828"/><circle cx="175" cy="144" r="1.6" fill="#6a9a5e"/><circle cx="98" cy="138" r="1.4" fill="#5a8a52"/><circle cx="159" cy="125" r="1.4" fill="#2c5230"/><circle cx="153" cy="130" r="1.3" fill="#274828"/><circle cx="154" cy="128" r="2.1" fill="#6a9a5e"/><circle cx="153" cy="140" r="1.2" fill="#274828"/><circle cx="144" cy="142" r="1.4" fill="#6a9a5e"/><circle cx="99" cy="138" r="1.9" fill="#2c5230"/><circle cx="167" cy="138" r="1.5" fill="#2c5230"/><circle cx="155" cy="142" r="1.6" fill="#2c5230"/><circle cx="111" cy="144" r="2.3" fill="#2c5230"/><circle cx="170" cy="128" r="1.6" fill="#3c6a3a"/><circle cx="88" cy="142" r="2.0" fill="#274828"/><circle cx="151" cy="129" r="1.3" fill="#3c6a3a"/><circle cx="137" cy="133" r="1.4" fill="#5a8a52"/><circle cx="131" cy="141" r="2.6" fill="#6a9a5e"/><circle cx="165" cy="142" r="1.3" fill="#274828"/><circle cx="82" cy="137" r="2.5" fill="#6a9a5e"/><circle cx="128" cy="129" r="1.5" fill="#3c6a3a"/><circle cx="165" cy="146" r="2.0" fill="#3c6a3a"/><circle cx="92" cy="139" r="2.3" fill="#3c6a3a"/><circle cx="112" cy="135" r="1.7" fill="#6a9a5e"/><circle cx="100" cy="133" r="2.4" fill="#3c6a3a"/><circle cx="97" cy="135" r="1.8" fill="#5a8a52"/><circle cx="131" cy="125" r="2.3" fill="#3c6a3a"/><circle cx="151" cy="143" r="2.0" fill="#274828"/><circle cx="98" cy="137" r="2.3" fill="#5a8a52"/><circle cx="105" cy="144" r="2.3" fill="#2c5230"/><circle cx="120" cy="144" r="2.2" fill="#6a9a5e"/><circle cx="158" cy="141" r="1.5" fill="#274828"/><circle cx="97" cy="142" r="1.9" fill="#5a8a52"/><circle cx="79" cy="132" r="1.3" fill="#6a9a5e"/><circle cx="106" cy="145" r="1.7" fill="#5a8a52"/><circle cx="147" cy="137" r="1.3" fill="#6a9a5e"/><circle cx="132" cy="135" r="2.2" fill="#2c5230"/><circle cx="157" cy="146" r="1.4" fill="#3c6a3a"/><circle cx="124" cy="136" r="2.1" fill="#2c5230"/><circle cx="107" cy="132" r="1.9" fill="#6a9a5e"/><circle cx="179" cy="137" r="2.1" fill="#3c6a3a"/><circle cx="162" cy="127" r="2.1" fill="#6a9a5e"/><circle cx="177" cy="133" r="1.7" fill="#2c5230"/><circle cx="179" cy="143" r="2.1" fill="#6a9a5e"/><circle cx="197" cy="143" r="1.5" fill="#2c5230"/><circle cx="205" cy="137" r="1.5" fill="#5a8a52"/><circle cx="211" cy="139" r="2.0" fill="#2c5230"/><circle cx="213" cy="135" r="1.9" fill="#3c6a3a"/><circle cx="211" cy="138" r="1.7" fill="#5a8a52"/><circle cx="217" cy="141" r="1.9" fill="#3c6a3a"/><circle cx="213" cy="138" r="1.7" fill="#3c6a3a"/><circle cx="207" cy="143" r="1.3" fill="#3c6a3a"/><circle cx="198" cy="141" r="1.4" fill="#2c5230"/><circle cx="218" cy="137" r="1.3" fill="#5a8a52"/><circle cx="210" cy="139" r="2.2" fill="#3c6a3a"/><circle cx="204" cy="136" r="1.7" fill="#2c5230"/><circle cx="211" cy="139" r="2.0" fill="#2c5230"/><circle cx="212" cy="138" r="1.8" fill="#5a8a52"/><circle cx="219" cy="143" r="1.4" fill="#5a8a52"/><circle cx="207" cy="139" r="2.1" fill="#2c5230"/><circle cx="210" cy="138" r="1.9" fill="#2c5230"/><circle cx="213" cy="141" r="2.0" fill="#3c6a3a"/><circle cx="213" cy="137" r="1.8" fill="#3c6a3a"/><circle cx="211" cy="137" r="1.2" fill="#5a8a52"/><circle cx="197" cy="137" r="1.2" fill="#2c5230"/><circle cx="197" cy="137" r="1.3" fill="#2c5230"/><circle cx="198" cy="140" r="1.5" fill="#5a8a52"/><circle cx="219" cy="139" r="1.5" fill="#2c5230"/><circle cx="204" cy="141" r="2.2" fill="#3c6a3a"/><circle cx="206" cy="142" r="1.7" fill="#3c6a3a"/><circle cx="213" cy="138" r="1.6" fill="#3c6a3a"/><circle cx="211" cy="143" r="1.5" fill="#2c5230"/><circle cx="213" cy="142" r="1.7" fill="#3c6a3a"/><circle cx="204" cy="136" r="1.3" fill="#2c5230"/></g><circle cx="34" cy="159" r="24" fill="none" stroke="#ffffff" stroke-width="1" opacity="0.45"/><circle cx="34" cy="159" r="20" fill="none" stroke="#ffffff" stroke-width="0.6" opacity="0.35"/><text x="160" y="151" font-family="'Noto Sans CJK SC',sans-serif" font-size="7.5" fill="#fff" opacity="0.6" font-weight="700">大众点评</text></g></svg>
<svg style="left:347.2px;top:1327px;overflow:hidden;" width="138" height="54" viewBox="0 0 138 54" preserveAspectRatio="none"><defs><clipPath id="r1c"><rect width="138" height="80" rx="8"/></clipPath><filter id="d0" x="-10%" y="-10%" width="120%" height="120%"><feGaussianBlur stdDeviation="0.7"/></filter><filter id="d1" x="-10%" y="-10%" width="120%" height="120%"><feGaussianBlur stdDeviation="1.6"/></filter><linearGradient id="tb1" x1="0" y1="0" x2="1" y2="1"><stop offset="0" stop-color="#e2b078"/><stop offset="1" stop-color="#cc9254"/></linearGradient></defs><g clip-path="url(#r1c)"><rect width="138" height="80" fill="url(#tb1)"/><rect width="138" height="26" fill="#e2deda"/><g filter="url(#d0)"><rect x="8" y="0" width="3.2" height="26" fill="#b47e48"/><rect x="20" y="0" width="3.2" height="26" fill="#b47e48"/><rect x="32" y="0" width="3.2" height="26" fill="#b47e48"/><rect x="43" y="0" width="3.2" height="26" fill="#b47e48"/><rect x="0" y="0" width="3" height="28" fill="#2a2a30"/><rect x="5" y="4" width="5" height="24" fill="#b8824c"/><rect x="55" y="0" width="44" height="18" fill="#ece8e8"/><rect x="97" y="0" width="10" height="15" fill="#383e46"/><rect x="110" y="0" width="4" height="16" fill="#a89078"/><rect x="118" y="0" width="4" height="16" fill="#a89078"/><rect x="126" y="0" width="4" height="16" fill="#a89078"/><rect x="133" y="0" width="4" height="16" fill="#a89078"/><rect x="107" y="0" width="31" height="16" fill="#c8c0b8" opacity="0.5"/><path d="M0 28 L60 21 L138 13 L138 54 L0 54Z" fill="url(#tb1)"/><path d="M10 24 L60 19 L60 24 L12 30Z" fill="#e8d8c4"/><path d="M56 30 Q52 14 62 10 Q70 2 78 9 Q90 6 94 18 Q97 28 88 33 Q72 38 56 30Z" fill="#4a9a28"/><path d="M62 24 Q64 12 72 10 Q78 16 76 28Z" fill="#72bc40"/><path d="M80 12 Q88 12 90 24 L82 30Z" fill="#3a7c20"/><path d="M58 22 Q60 16 66 18 L64 28Z" fill="#2f6a1c"/><path d="M59 31 H87 Q86 44 78 46 H68 Q60 43 59 31Z" fill="#2a2426"/><path d="M0 38 L54 30 L56 41 L6 50 L0 50Z" fill="#30303a"/><path d="M7.0 39.5 l5 -1 l1.2 8 l-5 1z" fill="#ebe8dc"/><path d="M12.7 38.4 l5 -1 l1.2 8 l-5 1z" fill="#ebe8dc"/><path d="M18.4 37.3 l5 -1 l1.2 8 l-5 1z" fill="#ebe8dc"/><path d="M24.1 36.2 l5 -1 l1.2 8 l-5 1z" fill="#ebe8dc"/><path d="M29.8 35.1 l5 -1 l1.2 8 l-5 1z" fill="#ebe8dc"/><path d="M35.5 34.0 l5 -1 l1.2 8 l-5 1z" fill="#ebe8dc"/><path d="M41.2 32.9 l5 -1 l1.2 8 l-5 1z" fill="#ebe8dc"/><path d="M46.9 31.8 l5 -1 l1.2 8 l-5 1z" fill="#ebe8dc"/><ellipse cx="3" cy="41" rx="6" ry="5" fill="#a4b4b4"/><ellipse cx="3" cy="40" rx="4" ry="3" fill="#d8e4e0"/><path d="M0 48 L22 46 L22 54 L0 54Z" fill="#3a3c5c"/><path d="M24 49 L66 43 L72 54 L26 54Z" fill="#d8dce6"/><path d="M33 50 Q42 44 56 45 Q64 47 66 54 L34 54Z" fill="#c8364a"/><ellipse cx="116" cy="52" rx="29" ry="17" fill="#c8a250"/><ellipse cx="117" cy="53" rx="25" ry="13.5" fill="#3c2c18"/><ellipse cx="118" cy="50" rx="22" ry="6" fill="none" stroke="#a8843a" stroke-width="2.4"/><ellipse cx="119" cy="58" rx="19" ry="7" fill="#8a6a2c"/></g></g></svg>
<svg style="left:492px;top:1327px;overflow:hidden;" width="138" height="54" viewBox="0 0 138 54" preserveAspectRatio="none"><defs><clipPath id="r2c"><rect width="138" height="80" rx="8"/></clipPath><linearGradient id="gd2" x1="0" y1="0" x2="1" y2="0"><stop offset="0" stop-color="#e2ac2c"/><stop offset="0.4" stop-color="#c89a34"/><stop offset="1" stop-color="#b08a3c"/></linearGradient></defs><g clip-path="url(#r2c)"><rect width="138" height="80" fill="#dcaa72"/><rect x="50" width="88" height="3.4" fill="#3c4a70"/><rect x="116" y="0" width="22" height="7" fill="#dfe4ea" filter="url(#d0)"/><path d="M60 6 L138 4 L138 18 L64 22Z" fill="#e8c49c" opacity="0.7" filter="url(#d1)"/><g filter="url(#d0)"><path d="M0 3 L22 3 L24 18 L0 28Z" fill="#363e48"/><path d="M0 10 L20 9 L21 17 L0 24Z" fill="#d8e0e8"/><rect x="0" y="18" width="2.4" height="3.5" fill="#c82838"/><path d="M19 0 H60 Q60 16 52 22 Q40 25 30 22 Q20 16 19 0Z" fill="#4c3632"/><path d="M22 14 Q40 24 56 16 Q52 22 40 24 Q28 22 22 14Z" fill="#32221e"/><path d="M0 46 Q30 26 70 26 Q110 26 138 32 L138 80 L0 80Z" fill="url(#gd2)"/><path d="M0 46 Q30 26 70 26 Q110 26 138 32" fill="none" stroke="#5a4420" stroke-width="1.2"/><path d="M0 48 Q30 28 70 28 Q110 28 138 34" fill="none" stroke="#ecd890" stroke-width="1.4"/><path d="M52 50 Q90 40 138 46 L138 54 L46 54Z" fill="#2a2826"/><path d="M74 46 Q100 42 126 46 L124 50 L78 50Z" fill="#e6d6a0" opacity="0.8"/><ellipse cx="12" cy="50" rx="3.7" ry="3.5" fill="#18120e"/><ellipse cx="24" cy="46" rx="3.7" ry="3.5" fill="#18120e"/><ellipse cx="36" cy="42" rx="3.7" ry="3.5" fill="#18120e"/><ellipse cx="47" cy="38.5" rx="3.7" ry="3.5" fill="#18120e"/><ellipse cx="58" cy="36.3" rx="3.7" ry="3.5" fill="#18120e"/><ellipse cx="70" cy="35.2" rx="3.7" ry="3.5" fill="#18120e"/><ellipse cx="81" cy="35" rx="3.7" ry="3.5" fill="#18120e"/><ellipse cx="92" cy="35.5" rx="3.7" ry="3.5" fill="#18120e"/><ellipse cx="104" cy="37" rx="3.7" ry="3.5" fill="#18120e"/><ellipse cx="116" cy="39.4" rx="3.7" ry="3.5" fill="#18120e"/><ellipse cx="128" cy="42.2" rx="3.7" ry="3.5" fill="#18120e"/><ellipse cx="50" cy="52" rx="8" ry="4" fill="#6e3446"/><ellipse cx="60" cy="47" rx="6" ry="4" fill="#5a2838"/><ellipse cx="68" cy="49" rx="5" ry="4" fill="#6a3044"/></g></g></svg>
<svg style="left:638px;top:1327px;overflow:hidden;" width="138" height="54" viewBox="0 0 138 54" preserveAspectRatio="none"><defs><clipPath id="r3c"><rect width="138" height="80" rx="8"/></clipPath><linearGradient id="gr3c" x1="0" y1="0" x2="1" y2="0"><stop offset="0" stop-color="#d89426"/><stop offset="0.3" stop-color="#b47c3c"/><stop offset="0.7" stop-color="#a88048"/><stop offset="1" stop-color="#9a8a58"/></linearGradient></defs><g clip-path="url(#r3c)"><rect width="138" height="80" fill="#e2b484"/><g filter="url(#d0)"><ellipse cx="15" cy="-1" rx="16" ry="6" fill="#241e1e"/><ellipse cx="96" cy="-3" rx="25" ry="8.5" fill="#1e1a1a"/><rect x="36" y="0" width="14" height="5" fill="#eef2f4" opacity="0.7"/><path d="M117 8 l5 -1 l1 5 l-2 1 l0 5 l-2 0 l0 -5 l-2 -1z" fill="#cfe0ee"/><path d="M0 16 Q30 7 60 7 Q100 8 138 29 L138 80 L0 80Z" fill="url(#gr3c)"/><path d="M0 16 Q30 7 60 7 Q100 8 138 29" fill="none" stroke="#ecd088" stroke-width="2"/><path d="M0 28 L26 30 L22 46 L0 50Z" fill="#dc9a26"/><path d="M0 52 Q10 40 30 34 Q60 28 90 34 Q110 40 122 54 L0 54Z" fill="#2a2630"/><path d="M88 30 Q104 34 118 46 L116 54 L100 54 Q98 40 88 30Z" fill="#8c9a62" opacity="0.8"/><ellipse cx="6" cy="25" rx="4.2" ry="4" fill="#16100e"/><ellipse cx="19" cy="21" rx="4.2" ry="4" fill="#16100e"/><ellipse cx="31" cy="18.2" rx="4.2" ry="4" fill="#16100e"/><ellipse cx="44" cy="17" rx="4.2" ry="4" fill="#16100e"/><ellipse cx="56" cy="16.4" rx="4.2" ry="4" fill="#16100e"/><ellipse cx="68" cy="17" rx="4.2" ry="4" fill="#16100e"/><ellipse cx="80" cy="18.6" rx="4.2" ry="4" fill="#16100e"/><ellipse cx="92" cy="21" rx="4.2" ry="4" fill="#16100e"/><ellipse cx="103" cy="24.6" rx="4.2" ry="4" fill="#16100e"/><ellipse cx="115" cy="29" rx="4.2" ry="4" fill="#16100e"/><ellipse cx="126" cy="34" rx="4.2" ry="4" fill="#16100e"/><ellipse cx="37.5" cy="30" rx="10.5" ry="6" fill="#48223c"/><ellipse cx="62.5" cy="28.5" rx="9.5" ry="5.6" fill="#4c2646"/><ellipse cx="80" cy="32" rx="6" ry="3" fill="#5a2c50"/><path d="M15 42 l4 -3 l3 2 l4 -1 l-1 4 l2 3 l-5 0 l-3 2 l-1 -4z" fill="#ead8a0"/><path d="M33 46 Q44 40 60 42 L62 50 L36 51Z" fill="#c8364a"/><path d="M10 52 Q24 48 40 52 L40 54 L10 54Z" fill="#c84058"/><path d="M62 47 Q70 30 88 33 Q102 38 101 54 L93 54 Q93 42 84 40 Q74 39 68 50Z" fill="#ba4acc"/><ellipse cx="77" cy="44" rx="8" ry="5.5" fill="#b8302e"/><path d="M70 50 Q80 46 90 52 L90 54 L70 54Z" fill="#7a4a48"/><path d="M40 54 Q48 49 58 54Z" fill="#a892ea"/><path d="M118 40 Q128 33 138 35 L138 54 L122 54 Q116 48 118 40Z" fill="#d88a78"/></g></g></svg>
<svg style="left:783.1px;top:1327px;overflow:hidden;" width="51" height="54" viewBox="0 0 51 54" preserveAspectRatio="none"><defs><clipPath id="r4c"><path d="M8 0 H51 V80 H0 V8 Q0 0 8 0Z"/></clipPath><linearGradient id="gr4c" x1="0" y1="0" x2="1" y2="0"><stop offset="0" stop-color="#d89426"/><stop offset="0.3" stop-color="#b47c3c"/><stop offset="0.7" stop-color="#a88048"/><stop offset="1" stop-color="#9a8a58"/></linearGradient></defs><g clip-path="url(#r4c)"><rect width="138" height="80" fill="#e2b484"/><g filter="url(#d0)"><ellipse cx="15" cy="-1" rx="16" ry="6" fill="#241e1e"/><ellipse cx="96" cy="-3" rx="25" ry="8.5" fill="#1e1a1a"/><rect x="36" y="0" width="14" height="5" fill="#eef2f4" opacity="0.7"/><path d="M117 8 l5 -1 l1 5 l-2 1 l0 5 l-2 0 l0 -5 l-2 -1z" fill="#cfe0ee"/><path d="M0 16 Q30 7 60 7 Q100 8 138 29 L138 80 L0 80Z" fill="url(#gr4c)"/><path d="M0 16 Q30 7 60 7 Q100 8 138 29" fill="none" stroke="#ecd088" stroke-width="2"/><path d="M0 28 L26 30 L22 46 L0 50Z" fill="#dc9a26"/><path d="M0 52 Q10 40 30 34 Q60 28 90 34 Q110 40 122 54 L0 54Z" fill="#2a2630"/><path d="M88 30 Q104 34 118 46 L116 54 L100 54 Q98 40 88 30Z" fill="#8c9a62" opacity="0.8"/><ellipse cx="6" cy="25" rx="4.2" ry="4" fill="#16100e"/><ellipse cx="19" cy="21" rx="4.2" ry="4" fill="#16100e"/><ellipse cx="31" cy="18.2" rx="4.2" ry="4" fill="#16100e"/><ellipse cx="44" cy="17" rx="4.2" ry="4" fill="#16100e"/><ellipse cx="56" cy="16.4" rx="4.2" ry="4" fill="#16100e"/><ellipse cx="68" cy="17" rx="4.2" ry="4" fill="#16100e"/><ellipse cx="80" cy="18.6" rx="4.2" ry="4" fill="#16100e"/><ellipse cx="92" cy="21" rx="4.2" ry="4" fill="#16100e"/><ellipse cx="103" cy="24.6" rx="4.2" ry="4" fill="#16100e"/><ellipse cx="115" cy="29" rx="4.2" ry="4" fill="#16100e"/><ellipse cx="126" cy="34" rx="4.2" ry="4" fill="#16100e"/><ellipse cx="37.5" cy="30" rx="10.5" ry="6" fill="#48223c"/><ellipse cx="62.5" cy="28.5" rx="9.5" ry="5.6" fill="#4c2646"/><ellipse cx="80" cy="32" rx="6" ry="3" fill="#5a2c50"/><path d="M15 42 l4 -3 l3 2 l4 -1 l-1 4 l2 3 l-5 0 l-3 2 l-1 -4z" fill="#ead8a0"/><path d="M33 46 Q44 40 60 42 L62 50 L36 51Z" fill="#c8364a"/><path d="M10 52 Q24 48 40 52 L40 54 L10 54Z" fill="#c84058"/><path d="M62 47 Q70 30 88 33 Q102 38 101 54 L93 54 Q93 42 84 40 Q74 39 68 50Z" fill="#ba4acc"/><ellipse cx="77" cy="44" rx="8" ry="5.5" fill="#b8302e"/><path d="M70 50 Q80 46 90 52 L90 54 L70 54Z" fill="#7a4a48"/><path d="M40 54 Q48 49 58 54Z" fill="#a892ea"/><path d="M118 40 Q128 33 138 35 L138 54 L122 54 Q116 48 118 40Z" fill="#d88a78"/></g></g></svg>
<svg style="left:263.7px;top:1176.7px;" width="72.4" height="72.4" viewBox="0 0 72.4 72.4" preserveAspectRatio="none"><defs><clipPath id="avc"><circle cx="36.2" cy="36.2" r="36.2"/></clipPath><filter id="e0" x="-10%" y="-10%" width="120%" height="120%"><feGaussianBlur stdDeviation="0.9"/></filter><linearGradient id="avb" x1="0" y1="0" x2="1" y2="1"><stop offset="0" stop-color="#b4d6f0"/><stop offset="0.5" stop-color="#94c0ea"/><stop offset="1" stop-color="#78aade"/></linearGradient></defs><g clip-path="url(#avc)"><rect width="73" height="73" fill="url(#avb)"/><g filter="url(#e0)"><path d="M30 0 H60 L56 18 L44 24 L34 18Z" fill="#cfe4f2"/><rect x="45.5" y="24" width="1.6" height="50" fill="#bcdaf2"/><path d="M31 20 L40 6 L50 4 L50 16 L46 26 L44 42 L26 73 L0 73 L0 44Z" fill="#ebe7e9"/><path d="M44 6 L50 4 L50 14 L45 16Z" fill="#b89878"/><path d="M40 14 L46 12 L45 24 L38 26Z" fill="#eadfd0"/><ellipse cx="15" cy="26" rx="17" ry="21" fill="#191b19" transform="rotate(12 15 26)"/><path d="M7 27 h8 v5 h-7z" fill="#e8f0e8"/><ellipse cx="20" cy="41" rx="3.4" ry="3" fill="#7a74a0"/><path d="M0 46 Q10 54 20 48 L12 73 L0 73Z" fill="#ece8ea"/></g></g></svg>
<div style="left:1107px;top:0px;width:1296px;height:1411px;background:#282828;"></div>
<div style="left:1106.8px;top:0px;width:1.4px;height:1411px;background:#5c5c5c;"></div>
<div style="left:1108px;top:0px;width:1295px;height:43px;background:#222222;"></div>
<div style="left:1237.3px;top:0px;width:1.7px;height:43px;background:#4a4e55;"></div>
<div style="left:2273px;top:0px;width:2px;height:43px;background:#4a4e55;"></div>
<svg style="left:1119px;top:9px;" width="27" height="24" viewBox="0 0 27 24" preserveAspectRatio="none"><g fill="none" stroke="#c4c4c4" stroke-width="1.6" stroke-linecap="round" stroke-linejoin="round"><path d="M12 18.5 H4.5 Q2 18.5 2 16 V5 Q2 2.5 4.5 2.5 H21.5 Q24 2.5 24 5 V12"/><path d="M13.5 9.5 L15.5 22 L18.3 18.3 L23.3 17 Z"/></g></svg>
<svg style="left:1161px;top:8px;" width="27" height="25" viewBox="0 0 27 25" preserveAspectRatio="none"><g fill="none" stroke="#6ea6f2" stroke-width="1.6" stroke-linecap="round" stroke-linejoin="round"><path d="M8 5.5 V4 Q8 2 10 2 H22.5 Q24.5 2 24.5 4 V14.5 Q24.5 16.5 22.5 16.5 H14"/><rect x="2" y="8" width="9.5" height="14.5" rx="2"/><path d="M5.8 19 H7.8 M16 12 H19.5"/></g></svg>
<svg style="left:1205px;top:9px;" width="23" height="22" viewBox="0 0 23 22" preserveAspectRatio="none"><rect x="1.2" y="1.2" width="20.2" height="19.2" rx="3" fill="none" stroke="#c4c4c4" stroke-width="1.7"/><path d="M1.2 4 Q1.2 1.2 4 1.2 H6.8 V20.4 H4 Q1.2 20.4 1.2 17.6Z" fill="#c4c4c4"/></svg>
<svg style="left:1259px;top:6px;" width="26" height="28" viewBox="0 0 26 28" preserveAspectRatio="none"><g fill="none" stroke="#c4c4c4" stroke-width="1.8" stroke-linecap="round" stroke-linejoin="round"><path d="M2 12.5 L12.5 2.5 L23 12.5 V23.5 Q23 25.5 21 25.5 H16.5 V17 Q16.5 15.5 15 15.5 H10 Q8.5 15.5 8.5 17 V25.5 H4 Q2 25.5 2 23.5 Z"/></g></svg>
<span id="t39" style="top:9.00px;font-size:18px;line-height:25px;color:#b0b0b0;font-family:'Liberation Sans','Noto Sans CJK SC',sans-serif;white-space:pre;left:1291.78px;letter-spacing:1.620px;">欢迎</span>
<svg style="left:1359px;top:7px;" width="29" height="26" viewBox="0 0 29 26" preserveAspectRatio="none"><g fill="none" stroke="#c4c4c4" stroke-width="1.8" stroke-linecap="round" stroke-linejoin="round"><path d="M7.5 6 L1.5 13 L7.5 20 M21.5 6 L27.5 13 L21.5 20 M17.5 2 L11 24.5"/></g></svg>
<span id="t40" style="top:9.00px;font-size:18px;line-height:25px;color:#b0b0b0;font-family:'Liberation Sans','Noto Sans CJK SC',sans-serif;white-space:pre;left:1394.28px;letter-spacing:1.620px;">元素</span>
<svg style="left:1469px;top:8px;" width="26" height="24" viewBox="0 0 26 24" preserveAspectRatio="none"><g fill="none" stroke="#c4c4c4" stroke-width="1.8" stroke-linecap="round" stroke-linejoin="round"><rect x="1.5" y="1.5" width="23" height="21" rx="3.5"/><path d="M1.5 6.2 H24.5 M5.8 11 L9.6 14.4 L5.8 17.8 M11.5 18 H19"/></g></svg>
<span id="t41" style="top:9.00px;font-size:18px;line-height:25px;color:#b0b0b0;font-family:'Liberation Sans','Noto Sans CJK SC',sans-serif;white-space:pre;left:1502.28px;letter-spacing:1.060px;">控制台</span>
<svg style="left:1595px;top:7px;" width="26" height="26" viewBox="0 0 26 26" preserveAspectRatio="none"><g fill="none" stroke="#c4c4c4" stroke-width="1.8" stroke-linecap="round" stroke-linejoin="round"><path d="M8 8 Q8 3.5 13 3.5 Q18 3.5 18 8 V17 Q18 22.5 13 22.5 Q8 22.5 8 17 Z"/><path d="M8 10.5 H18 M8 14 H2.5 M18 14 H23.5 M8 9 L3.5 5.5 V2.5 M18 9 L22.5 5.5 V2.5 M8 18 L3.5 21 V24 M18 18 L22.5 21 V24"/></g></svg>
<span id="t42" style="top:9.00px;font-size:18px;line-height:25px;color:#b0b0b0;font-family:'Liberation Sans','Noto Sans CJK SC',sans-serif;white-space:pre;left:1628.28px;letter-spacing:1.060px;">源代码</span>
<svg style="left:1713px;top:9px;" width="29" height="23" viewBox="0 0 29 23" preserveAspectRatio="none"><g fill="none" stroke="#ffffff" stroke-width="2" stroke-linecap="round" stroke-linejoin="round"><path d="M2 9 Q14.5 -3 27 9 M6 13.5 Q14.5 5.5 23 13.5 M10.2 17.6 Q14.5 13.6 18.8 17.6"/></g></svg>
<div style="left:1725px;top:28px;width:5px;height:5px;background:#fff;border-radius:50%;"></div>
<span id="t43" style="top:9.00px;font-size:18px;line-height:25px;color:#ffffff;font-family:'Liberation Sans','Noto Sans CJK SC',sans-serif;white-space:pre;left:1748.28px;letter-spacing:1.620px;">网络</span>
<div style="left:1702px;top:38px;width:96px;height:4px;background:#0a7ad6;border-radius:2px;"></div>
<svg style="left:1808px;top:9px;" width="31" height="22" viewBox="0 0 31 22" preserveAspectRatio="none"><g fill="none" stroke="#c4c4c4" stroke-width="1.7" stroke-linecap="round" stroke-linejoin="round"><path d="M3 17 Q0.5 9 7 4.5 Q13 0.5 20 3.5 M24.5 7 Q29 12 27 17.5 M7.2 11.2 L5 9.5"/><path d="M22.3 2.6 L14 17 Q12.8 19.6 15.4 20.2 Q17.4 20.4 18 18.4 Z"/></g></svg>
<span id="t44" style="top:9.00px;font-size:18px;line-height:25px;color:#b0b0b0;font-family:'Liberation Sans','Noto Sans CJK SC',sans-serif;white-space:pre;left:1844.28px;letter-spacing:1.120px;">性能</span>
<svg style="left:1905px;top:6px;" width="28" height="28" viewBox="0 0 28 28" preserveAspectRatio="none"><g fill="none" stroke="#c4c4c4" stroke-width="1.7" stroke-linecap="round" stroke-linejoin="round"><rect x="5" y="5" width="18" height="18" rx="4"/><circle cx="14" cy="14" r="4.2"/><path d="M10 5 V1.5 M14 5 V1.5 M18 5 V1.5 M10 26.5 V23 M14 26.5 V23 M18 26.5 V23 M5 10 H1.5 M5 14 H1.5 M5 18 H1.5 M26.5 10 H23 M26.5 14 H23 M26.5 18 H23"/></g></svg>
<span id="t45" style="top:9.00px;font-size:18px;line-height:25px;color:#b0b0b0;font-family:'Liberation Sans','Noto Sans CJK SC',sans-serif;white-space:pre;left:1940.28px;letter-spacing:1.120px;">内存</span>
<svg style="left:2002px;top:8px;" width="26" height="24" viewBox="0 0 26 24" preserveAspectRatio="none"><g fill="none" stroke="#e6e6e6" stroke-width="1.9" stroke-linecap="round" stroke-linejoin="round"><rect x="1.5" y="1.5" width="22.5" height="21" rx="4"/><path d="M1.5 7 H24"/></g></svg>
<span id="t46" style="top:9.00px;font-size:18px;line-height:25px;color:#b0b0b0;font-family:'Liberation Sans','Noto Sans CJK SC',sans-serif;white-space:pre;left:2035.78px;letter-spacing:0.540px;">应用程序</span>
<svg style="left:2131px;top:3px;" width="34" height="34" viewBox="0 0 34 34" preserveAspectRatio="none"><path d="M12.3 1.8 Q24 0.5 30.5 9 Q35 18 29.5 27 Q23 34.5 13.5 32.5 Q4 30 1.7 20 Q0.8 16 2 13.2 Q5.5 14.5 7.8 12.2 Q7.6 9.8 9.6 8.6 Q11.8 7 11.4 4.4 Q11.4 2.8 12.3 1.8 Z" fill="#bf7f5a" stroke="#0c0a08" stroke-width="1.3" stroke-linejoin="round"/><g fill="#1e1614"><ellipse cx="20.2" cy="9.4" rx="2.6" ry="2.3"/><path d="M11 15.6 L14.6 13.2 L16.4 15.8 L14.6 18.8 L11.4 17.8Z"/><path d="M22.6 15.6 L25 14.4 L27.2 15.6 L26.4 18.4 L24.6 19.2 L22.2 17.6Z"/><path d="M8.4 22.4 L12.4 22 L13.8 24.4 L12 26.6 L8 25.8Z"/><path d="M19.2 22.2 L22 23 L23.6 24.6 L23 26.6 L19.4 26.6Z"/></g></svg>
<svg style="left:2186px;top:8px;" width="22" height="22" viewBox="0 0 22 22" preserveAspectRatio="none"><path d="M11 1.5 V20.5 M1.5 11 H20.5" stroke="#c4c4c4" stroke-width="1.8" stroke-linecap="round"/></svg>
<div style="left:2288.4px;top:14.1px;width:4px;height:4px;background:#c4c4c4;border-radius:50%;"></div>
<div style="left:2296.0px;top:14.1px;width:4px;height:4px;background:#c4c4c4;border-radius:50%;"></div>
<div style="left:2303.6px;top:14.1px;width:4px;height:4px;background:#c4c4c4;border-radius:50%;"></div>
<svg style="left:2327px;top:3px;" width="26" height="26" viewBox="0 0 26 26" preserveAspectRatio="none"><circle cx="13" cy="13" r="11.3" fill="none" stroke="#c4c4c4" stroke-width="1.6"/></svg>
<span id="t47" style="top:5.50px;font-size:17px;line-height:24px;color:#c4c4c4;font-family:'Liberation Sans','Noto Sans CJK SC',sans-serif;white-space:pre;left:2340px;transform:translateX(-50%);">?</span>
<svg style="left:2371px;top:6px;" width="21" height="21" viewBox="0 0 21 21" preserveAspectRatio="none"><path d="M2 2 L19 19 M19 2 L2 19" stroke="#c4c4c4" stroke-width="1.7" stroke-linecap="round"/></svg>
<div style="left:1108px;top:43px;width:1295px;height:39px;background:#333333;"></div>
<div style="left:1108px;top:82px;width:1295px;height:1px;background:#555;"></div>
<svg style="left:1119px;top:49px;" width="26" height="26" viewBox="0 0 26 26" preserveAspectRatio="none"><circle cx="13" cy="13" r="11.4" fill="none" stroke="#e46962" stroke-width="1.8"/><rect x="8.4" y="8.4" width="9.2" height="9.2" rx="2.2" fill="#e46962"/></svg>
<svg style="left:1161px;top:49px;" width="26" height="26" viewBox="0 0 26 26" preserveAspectRatio="none"><circle cx="13" cy="13" r="11.3" fill="none" stroke="#c4c4c4" stroke-width="1.7"/><path d="M5.2 20.8 L20.8 5.2" stroke="#c4c4c4" stroke-width="1.7"/></svg>
<svg style="left:1203px;top:48px;" width="28" height="28" viewBox="0 0 28 28" preserveAspectRatio="none"><g stroke="#7cacf8" stroke-width="1.8" stroke-linecap="round" fill="none"><path d="M2 10 H11 M4.5 16.5 H16.5 M7.5 23 H15"/></g><circle cx="20.5" cy="7.5" r="6.8" fill="#7cacf8"/><path d="M18 5 L23 10 M23 5 L18 10" stroke="#1f1f1f" stroke-width="1.5" stroke-linecap="round"/><circle cx="22.5" cy="22.5" r="3" fill="#7cacf8"/></svg>
<svg style="left:1246px;top:51px;" width="25" height="25" viewBox="0 0 25 25" preserveAspectRatio="none"><g fill="none" stroke="#c4c4c4" stroke-width="1.8" stroke-linecap="round" stroke-linejoin="round"><circle cx="9.8" cy="9.8" r="7.8"/><path d="M15.5 15.5 L22.8 22.8"/></g></svg>
<div style="left:1288px;top:53px;width:18px;height:18px;background:#3a3a3a;box-sizing:border-box;border:1.6px solid #7a7a7a;border-radius:4.5px;"></div>
<span id="t48" style="top:51.60px;font-size:18px;line-height:25px;color:#d0d0d0;font-family:'Liberation Sans','Noto Sans CJK SC',sans-serif;white-space:pre;left:1314.78px;letter-spacing:0.540px;">保留日志</span>
<div style="left:1404px;top:53px;width:18px;height:18px;background:#3a3a3a;box-sizing:border-box;border:1.6px solid #7a7a7a;border-radius:4.5px;"></div>
<span id="t49" style="top:51.60px;font-size:18px;line-height:25px;color:#d0d0d0;font-family:'Liberation Sans','Noto Sans CJK SC',sans-serif;white-space:pre;left:1430.28px;letter-spacing:0.540px;">禁用缓存</span>
<span id="t50" style="top:51.60px;font-size:18px;line-height:25px;color:#d0d0d0;font-family:'Liberation Sans','Noto Sans CJK SC',sans-serif;white-space:pre;left:1521.78px;letter-spacing:0.810px;">无限制</span>
<svg style="left:1616px;top:57px;" width="16" height="11.7" viewBox="0 0 16 11.7" preserveAspectRatio="none"><path d="M1.8 0.2 H14.2 Q16.4 0.2 15.2 2.1 L9.1 10.799999999999999 Q8.0 12.2 6.9 10.799999999999999 L0.8 2.1 Q-0.4 0.2 1.8 0.2Z" fill="#a0a0a0"/></svg>
<svg style="left:1647px;top:50px;" width="28" height="27" viewBox="0 0 28 27" preserveAspectRatio="none"><g fill="none" stroke="#c4c4c4" stroke-width="1.7" stroke-linecap="round" stroke-linejoin="round"><path d="M1.8 10.2 Q13 -3 24.6 10.2 M5.2 14 Q11.5 5.6 18.6 11 M8.8 17.6 Q10.6 13.6 14 12.8"/></g></svg>
<svg style="left:1659.8px;top:61.8px;" width="14" height="14" viewBox="0 0 14 14" preserveAspectRatio="none"><path d="M8.33 0.43 L5.67 0.43 L5.17 3.11 L4.55 3.47 L1.98 2.56 L0.65 4.87 L2.72 6.64 L2.72 7.36 L0.65 9.13 L1.98 11.44 L4.55 10.53 L5.17 10.89 L5.67 13.57 L8.33 13.57 L8.83 10.89 L9.45 10.53 L12.02 11.44 L13.35 9.13 L11.28 7.36 L11.28 6.64 L13.35 4.87 L12.02 2.56 L9.45 3.47 L8.83 3.11Z" fill="#c8c8c8" stroke="#333" stroke-width="0.8"/><circle cx="7" cy="7" r="1.4" fill="#333"/></svg>
<svg style="left:1691px;top:49.3px;" width="20" height="25" viewBox="0 0 20 25" preserveAspectRatio="none"><g fill="none" stroke="#c4c4c4" stroke-width="1.7" stroke-linecap="round" stroke-linejoin="round"><path d="M1.5 1.5 H18.5 M10 23.5 V6 M3.5 12.5 L10 6 L16.5 12.5"/></g></svg>
<svg style="left:1734px;top:49.3px;" width="20" height="25" viewBox="0 0 20 25" preserveAspectRatio="none"><g fill="none" stroke="#c4c4c4" stroke-width="1.7" stroke-linecap="round" stroke-linejoin="round"><path d="M1.5 23.5 H18.5 M10 1.5 V19 M3.5 12.5 L10 19 L16.5 12.5"/></g></svg>
<svg style="left:2368px;top:49px;" width="26" height="26" viewBox="0 0 26 26" preserveAspectRatio="none"><path d="M15.54 1.07 L10.46 1.07 L9.97 4.95 L7.54 6.35 L3.94 4.83 L1.39 9.24 L4.51 11.60 L4.51 14.40 L1.39 16.76 L3.94 21.17 L7.54 19.65 L9.97 21.05 L10.46 24.93 L15.54 24.93 L16.03 21.05 L18.46 19.65 L22.06 21.17 L24.61 16.76 L21.49 14.40 L21.49 11.60 L24.61 9.24 L22.06 4.83 L18.46 6.35 L16.03 4.95Z" fill="none" stroke="#c4c4c4" stroke-width="1.7" stroke-linejoin="round"/><circle cx="13" cy="13" r="3.5" fill="none" stroke="#c4c4c4" stroke-width="1.7"/></svg>
<div style="left:1108px;top:83px;width:1295px;height:75px;background:#333333;"></div>
<div style="left:1116px;top:87px;width:993px;height:30px;background:#3d3d3d;border-radius:15px;"></div>
<svg style="left:1131px;top:95px;" width="18" height="14" viewBox="0 0 18 14" preserveAspectRatio="none"><path d="M1 1.5 H17 M4 7 H14 M6.5 12.5 H11.5" stroke="#c4c4c4" stroke-width="1.9" stroke-linecap="round"/></svg>
<span id="t51" style="top:91.60px;font-size:18px;line-height:25px;color:#c8c8c8;font-family:'Liberation Sans','Noto Sans CJK SC',sans-serif;white-space:pre;left:1156.78px;letter-spacing:0.810px;">筛选器</span>
<div style="left:2127px;top:93px;width:18px;height:18px;background:#3a3a3a;box-sizing:border-box;border:1.6px solid #7a7a7a;border-radius:4.5px;"></div>
<span id="t52" style="top:91.60px;font-size:18px;line-height:25px;color:#c8c8c8;font-family:'Liberation Sans','Noto Sans CJK SC',sans-serif;white-space:pre;left:2153.28px;letter-spacing:1.620px;">反转</span>
<div style="left:2206px;top:90px;width:1.5px;height:23px;background:#5a5a5a;"></div>
<span id="t53" style="top:91.60px;font-size:18px;line-height:25px;color:#ffffff;font-family:'Liberation Sans','Noto Sans CJK SC',sans-serif;white-space:pre;left:2234.78px;letter-spacing:0.124px;">增加筛选条件</span>
<svg style="left:2356px;top:99.5px;" width="16" height="11.7" viewBox="0 0 16 11.7" preserveAspectRatio="none"><path d="M1.8 0.2 H14.2 Q16.4 0.2 15.2 2.1 L9.1 10.799999999999999 Q8.0 12.2 6.9 10.799999999999999 L0.8 2.1 Q-0.4 0.2 1.8 0.2Z" fill="#dcdcdc"/></svg>
<div style="left:1114px;top:125px;width:51px;height:30px;box-sizing:border-box;border:1px solid #6a6a6a;border-radius:10px;"></div>
<span id="t54" style="top:128.30px;font-size:18px;line-height:25px;color:#e3e3e3;font-family:'Liberation Sans','Noto Sans CJK SC',sans-serif;white-space:pre;left:1120.78px;letter-spacing:1.620px;">全部</span>
<div style="left:1179px;top:125px;width:101px;height:30px;background:#474747;border-radius:10px;"></div>
<span id="t55" style="top:127.70px;font-size:18px;line-height:25px;color:#e3e3e3;font-family:'Liberation Sans','Noto Sans CJK SC',sans-serif;white-space:pre;left:1187.5px;letter-spacing:-0.504px;">Fetch/XHR</span>
<div style="left:1287px;top:125px;width:50px;height:30px;box-sizing:border-box;border:1px solid #6a6a6a;border-radius:10px;"></div>
<span id="t56" style="top:128.30px;font-size:18px;line-height:25px;color:#e3e3e3;font-family:'Liberation Sans','Noto Sans CJK SC',sans-serif;white-space:pre;left:1293.28px;letter-spacing:1.620px;">文档</span>
<div style="left:1343.5px;top:125px;width:47.5px;height:30px;box-sizing:border-box;border:1px solid #6a6a6a;border-radius:10px;"></div>
<span id="t57" style="top:127.70px;font-size:18px;line-height:25px;color:#e3e3e3;font-family:'Liberation Sans','Noto Sans CJK SC',sans-serif;white-space:pre;left:1351.75px;letter-spacing:-2.500px;">CSS</span>
<div style="left:1398px;top:125px;width:33px;height:30px;box-sizing:border-box;border:1px solid #6a6a6a;border-radius:10px;"></div>
<span id="t58" style="top:127.70px;font-size:18px;line-height:25px;color:#e3e3e3;font-family:'Liberation Sans','Noto Sans CJK SC',sans-serif;white-space:pre;left:1406.0px;letter-spacing:-2.500px;">JS</span>
<div style="left:1437.5px;top:125px;width:50.5px;height:30px;box-sizing:border-box;border:1px solid #6a6a6a;border-radius:10px;"></div>
<span id="t59" style="top:128.30px;font-size:18px;line-height:25px;color:#e3e3e3;font-family:'Liberation Sans','Noto Sans CJK SC',sans-serif;white-space:pre;left:1444.03px;letter-spacing:1.620px;">字体</span>
<div style="left:1494.5px;top:125px;width:48.5px;height:30px;box-sizing:border-box;border:1px solid #6a6a6a;border-radius:10px;"></div>
<span id="t60" style="top:127.70px;font-size:18px;line-height:25px;color:#e3e3e3;font-family:'Liberation Sans','Noto Sans CJK SC',sans-serif;white-space:pre;left:1503.25px;letter-spacing:0.492px;">Img</span>
<div style="left:1549.5px;top:125px;width:51.0px;height:30px;box-sizing:border-box;border:1px solid #6a6a6a;border-radius:10px;"></div>
<span id="t61" style="top:128.30px;font-size:18px;line-height:25px;color:#e3e3e3;font-family:'Liberation Sans','Noto Sans CJK SC',sans-serif;white-space:pre;left:1556.28px;letter-spacing:1.620px;">媒体</span>
<div style="left:1607px;top:125px;width:50.5px;height:30px;box-sizing:border-box;border:1px solid #6a6a6a;border-radius:10px;"></div>
<span id="t62" style="top:128.30px;font-size:18px;line-height:25px;color:#e3e3e3;font-family:'Liberation Sans','Noto Sans CJK SC',sans-serif;white-space:pre;left:1613.53px;letter-spacing:1.620px;">清单</span>
<div style="left:1663.5px;top:125px;width:70.5px;height:30px;box-sizing:border-box;border:1px solid #6a6a6a;border-radius:10px;"></div>
<span id="t63" style="top:127.70px;font-size:18px;line-height:25px;color:#e3e3e3;font-family:'Liberation Sans','Noto Sans CJK SC',sans-serif;white-space:pre;left:1672.25px;letter-spacing:-0.406px;">Socket</span>
<div style="left:1741px;top:125px;width:65.5px;height:30px;box-sizing:border-box;border:1px solid #6a6a6a;border-radius:10px;"></div>
<span id="t64" style="top:127.70px;font-size:18px;line-height:25px;color:#e3e3e3;font-family:'Liberation Sans','Noto Sans CJK SC',sans-serif;white-space:pre;left:1749.5px;letter-spacing:-0.609px;">Wasm</span>
<div style="left:1813px;top:125px;width:51px;height:30px;box-sizing:border-box;border:1px solid #6a6a6a;border-radius:10px;"></div>
<span id="t65" style="top:128.30px;font-size:18px;line-height:25px;color:#e3e3e3;font-family:'Liberation Sans','Noto Sans CJK SC',sans-serif;white-space:pre;left:1819.78px;letter-spacing:1.620px;">其他</span>
<div style="left:1171px;top:128px;width:1.5px;height:24px;background:#5e5e5e;"></div>
<div style="left:1108px;top:158px;width:1295px;height:1px;background:#5a5a5a;"></div>
<div style="left:1108px;top:159px;width:1295px;height:30px;background:#282828;"></div>
<div style="left:1108px;top:189px;width:1295px;height:90px;background:#232323;"></div>
<div style="left:1108px;top:279px;width:1295px;height:1px;background:#5e5e5e;"></div>
<div style="left:1269px;top:159px;width:1.3px;height:120px;background:#686868;"></div>
<span id="t66" style="top:163.20px;font-size:16.5px;line-height:23px;color:#e8e8e8;font-family:'Liberation Sans','Noto Sans CJK SC',sans-serif;white-space:pre;right:1137.5px;letter-spacing:-0.922px;">100 ms</span>
<div style="left:1430px;top:159px;width:1.3px;height:120px;background:#686868;"></div>
<span id="t67" style="top:163.20px;font-size:16.5px;line-height:23px;color:#e8e8e8;font-family:'Liberation Sans','Noto Sans CJK SC',sans-serif;white-space:pre;right:976.5px;letter-spacing:-0.922px;">200 ms</span>
<div style="left:1591px;top:159px;width:1.3px;height:120px;background:#686868;"></div>
<span id="t68" style="top:163.20px;font-size:16.5px;line-height:23px;color:#e8e8e8;font-family:'Liberation Sans','Noto Sans CJK SC',sans-serif;white-space:pre;right:815.5px;letter-spacing:-0.922px;">300 ms</span>
<div style="left:1752px;top:159px;width:1.3px;height:120px;background:#686868;"></div>
<span id="t69" style="top:163.20px;font-size:16.5px;line-height:23px;color:#e8e8e8;font-family:'Liberation Sans','Noto Sans CJK SC',sans-serif;white-space:pre;right:654.5px;letter-spacing:-0.922px;">400 ms</span>
<div style="left:1913px;top:159px;width:1.3px;height:120px;background:#686868;"></div>
<span id="t70" style="top:163.20px;font-size:16.5px;line-height:23px;color:#e8e8e8;font-family:'Liberation Sans','Noto Sans CJK SC',sans-serif;white-space:pre;right:493.5px;letter-spacing:-0.922px;">500 ms</span>
<div style="left:2074px;top:159px;width:1.3px;height:120px;background:#686868;"></div>
<span id="t71" style="top:163.20px;font-size:16.5px;line-height:23px;color:#e8e8e8;font-family:'Liberation Sans','Noto Sans CJK SC',sans-serif;white-space:pre;right:332.5px;letter-spacing:-0.922px;">600 ms</span>
<div style="left:2235px;top:159px;width:1.3px;height:120px;background:#686868;"></div>
<span id="t72" style="top:163.20px;font-size:16.5px;line-height:23px;color:#e8e8e8;font-family:'Liberation Sans','Noto Sans CJK SC',sans-serif;white-space:pre;right:171.5px;letter-spacing:-0.922px;">700 ms</span>
<div style="left:2396px;top:159px;width:1.3px;height:120px;background:#686868;"></div>
<span id="t73" style="top:163.20px;font-size:16.5px;line-height:23px;color:#e8e8e8;font-family:'Liberation Sans','Noto Sans CJK SC',sans-serif;white-space:pre;right:10.5px;letter-spacing:-0.922px;">800 ms</span>
<div style="left:1108px;top:186px;width:3px;height:93px;background:#1586d0;"></div>
<div style="left:1108px;top:158.5px;width:7.5px;height:28px;background:#a0a0a0;box-sizing:border-box;border-radius:0 4.5px 4.5px 0;border:1px solid #1586d0;border-left:none;"></div>
<div style="left:1109px;top:166px;width:2px;height:11px;background:#a8c7fa;"></div>
<div style="left:2401.5px;top:161px;width:2px;height:23px;background:#1586d0;"></div>
<div style="left:1160px;top:197.5px;width:134px;height:3px;background:#404040;"></div>
<div style="left:1322px;top:197.5px;width:14px;height:3px;background:#404040;"></div>
<div style="left:1421.6px;top:197.5px;width:36.40000000000009px;height:3px;background:#404040;"></div>
<div style="left:1160px;top:197.5px;width:2px;height:3px;background:#858585;"></div>
<div style="left:1111px;top:202.0px;width:11px;height:3px;background:#404040;"></div>
<div style="left:1123.5px;top:202.0px;width:8.099999999999909px;height:3px;background:#858585;"></div>
<div style="left:1133px;top:202.0px;width:1px;height:3px;background:#34b85a;"></div>
<div style="left:1135px;top:202.0px;width:14px;height:3px;background:#4688f1;"></div>
<div style="left:1160px;top:202.0px;width:80px;height:3px;background:#404040;"></div>
<div style="left:1240px;top:202.0px;width:11px;height:3px;background:#858585;"></div>
<div style="left:1253px;top:202.0px;width:1.5px;height:3px;background:#34b85a;"></div>
<div style="left:1255.7px;top:202.0px;width:14.0px;height:3px;background:#4688f1;"></div>
<div style="left:1270px;top:202.0px;width:9px;height:3px;background:#404040;"></div>
<div style="left:1280.7px;top:202.0px;width:2.7999999999999545px;height:3px;background:#858585;"></div>
<div style="left:1285px;top:202.0px;width:1px;height:3px;background:#34b85a;"></div>
<div style="left:1288px;top:202.0px;width:13.5px;height:3px;background:#4688f1;"></div>
<div style="left:1414px;top:202.0px;width:9px;height:3px;background:#4688f1;"></div>
<div style="left:1160px;top:206.5px;width:121px;height:3px;background:#404040;"></div>
<div style="left:1282.5px;top:206.5px;width:1.5px;height:3px;background:#858585;"></div>
<div style="left:1286px;top:206.5px;width:10px;height:3px;background:#34b85a;"></div>
<div style="left:1298px;top:206.5px;width:17px;height:3px;background:#4688f1;"></div>
<div style="left:1317.5px;top:206.5px;width:1.5px;height:3px;background:#404040;"></div>
<div style="left:1321px;top:206.5px;width:2.5px;height:3px;background:#858585;"></div>
<div style="left:1326px;top:206.5px;width:29px;height:3px;background:#34b85a;"></div>
<div style="left:1356.5px;top:206.5px;width:13.5px;height:3px;background:#4688f1;"></div>
<div style="left:1371px;top:206.2px;width:993px;height:3.6px;background:#34b85a;"></div>
<div style="left:2365px;top:206.5px;width:14px;height:3px;background:#4688f1;"></div>
<div style="left:1160px;top:210.8px;width:159.5999999999999px;height:3px;background:#404040;"></div>
<div style="left:1321.5px;top:210.8px;width:2.0px;height:3px;background:#858585;"></div>
<div style="left:1326px;top:210.8px;width:33px;height:3px;background:#34b85a;"></div>
<div style="left:1360.6px;top:210.8px;width:13.400000000000091px;height:3px;background:#4688f1;"></div>
<div style="left:1160px;top:215.3px;width:159.5999999999999px;height:3px;background:#404040;"></div>
<div style="left:1321.5px;top:215.3px;width:1.5px;height:3px;background:#858585;"></div>
<div style="left:1325.5px;top:215.3px;width:6.2000000000000455px;height:3px;background:#5ed0f2;"></div>
<div style="left:1333px;top:215.3px;width:7.5px;height:3px;background:#e08ae8;"></div>
<div style="left:1342px;top:215.3px;width:17px;height:3px;background:#34b85a;"></div>
<div style="left:1360.6px;top:215.3px;width:13.400000000000091px;height:3px;background:#4688f1;"></div>
<div style="left:1421.6px;top:215.3px;width:21.40000000000009px;height:3px;background:#404040;"></div>
<div style="left:1444.6px;top:215.3px;width:10.400000000000091px;height:3px;background:#858585;"></div>
<div style="left:1457px;top:215.3px;width:11.5px;height:3px;background:#34b85a;"></div>
<div style="left:1470px;top:215.3px;width:13.700000000000045px;height:3px;background:#4688f1;"></div>
<div style="left:1160px;top:219.9px;width:159.5999999999999px;height:3px;background:#404040;"></div>
<div style="left:1321.5px;top:219.9px;width:2.0px;height:3px;background:#858585;"></div>
<div style="left:1325.5px;top:219.9px;width:6.2000000000000455px;height:3px;background:#5ed0f2;"></div>
<div style="left:1333px;top:219.9px;width:7.5px;height:3px;background:#e08ae8;"></div>
<div style="left:1342px;top:219.9px;width:8.799999999999955px;height:3px;background:#34b85a;"></div>
<div style="left:1352px;top:219.9px;width:14px;height:3px;background:#4688f1;"></div>
<div style="left:1382.5px;top:224.3px;width:1.5px;height:3px;background:#404040;"></div>
<div style="left:1386.6px;top:224.3px;width:31.200000000000045px;height:3px;background:#34b85a;"></div>
<div style="left:1419.5px;top:224.3px;width:13.5px;height:3px;background:#4688f1;"></div>
<div style="left:1378.5px;top:194px;width:36px;height:16px;background:#0c4a70;box-sizing:border-box;border:1px solid #0e5a8a;"></div>
<div style="left:1381px;top:197.5px;width:2.5px;height:7.5px;background:#f0f0f0;"></div>
<div style="left:1383.5px;top:197.5px;width:2px;height:7.5px;background:#909090;"></div>
<div style="left:1385.5px;top:197.5px;width:23px;height:7.5px;background:#34b85a;"></div>
<div style="left:1408.5px;top:197.5px;width:3.5px;height:7.5px;background:#4688f1;"></div>
<div style="left:1404.2px;top:189px;width:1.3px;height:90px;background:#a8c7fa;"></div>
<div style="left:2376.2px;top:189px;width:1.5px;height:90px;background:#e8a6a0;"></div>
<div style="left:1108px;top:280px;width:1295px;height:39.5px;background:#3c3c3c;"></div>
<div style="left:1108px;top:280px;width:299px;height:39.5px;background:#333333;"></div>
<div style="left:1108px;top:319.2px;width:1295px;height:1.6px;background:#646464;"></div>
<div style="left:1407px;top:280.5px;width:1.2px;height:830px;background:#555;"></div>
<span id="t74" style="top:289.10px;font-size:18px;line-height:25px;color:#e0e0e0;font-family:'Liberation Sans','Noto Sans CJK SC',sans-serif;white-space:pre;left:1114.28px;letter-spacing:1.620px;">名称</span>
<div style="left:1108px;top:320.5px;width:299px;height:31px;background:#4a4a4a;"></div>
<div style="left:1108px;top:351.5px;width:299px;height:31px;background:#1f1f1f;"></div>
<svg style="left:1116px;top:328.0px;" width="20" height="15" viewBox="0 0 20 15" preserveAspectRatio="none"><g fill="none" stroke="#fff" stroke-width="1.9" stroke-linecap="round" stroke-linejoin="round"><path d="M5.6 1.2 Q3.4 1.2 3.4 3.4 V5.4 Q3.4 7.4 1.4 7.4 Q3.4 7.4 3.4 9.4 V11.4 Q3.4 13.6 5.6 13.6"/><path d="M14.4 1.2 Q16.6 1.2 16.6 3.4 V5.4 Q16.6 7.4 18.6 7.4 Q16.6 7.4 16.6 9.4 V11.4 Q16.6 13.6 14.4 13.6"/></g><circle cx="10" cy="5" r="1.5" fill="#fff"/><path d="M10 9 a1.5 1.5 0 1 1 -0.1 0 M11.4 10.4 Q11.4 12.6 9.2 13.6" fill="#fff" stroke="#fff" stroke-width="1.1"/></svg>
<span id="t75" style="top:324.00px;font-size:18px;line-height:25px;color:#e8e2d4;font-family:'Liberation Sans','Noto Sans CJK SC',sans-serif;white-space:pre;left:1144.5px;letter-spacing:-2.500px;">1</span>
<svg style="left:1116px;top:359.5px;" width="20" height="15" viewBox="0 0 20 15" preserveAspectRatio="none"><g fill="none" stroke="#fff" stroke-width="1.9" stroke-linecap="round" stroke-linejoin="round"><path d="M5.6 1.2 Q3.4 1.2 3.4 3.4 V5.4 Q3.4 7.4 1.4 7.4 Q3.4 7.4 3.4 9.4 V11.4 Q3.4 13.6 5.6 13.6"/><path d="M14.4 1.2 Q16.6 1.2 16.6 3.4 V5.4 Q16.6 7.4 18.6 7.4 Q16.6 7.4 16.6 9.4 V11.4 Q16.6 13.6 14.4 13.6"/></g><circle cx="10" cy="5" r="1.5" fill="#fff"/><path d="M10 9 a1.5 1.5 0 1 1 -0.1 0 M11.4 10.4 Q11.4 12.6 9.2 13.6" fill="#fff" stroke="#fff" stroke-width="1.1"/></svg>
<span id="t76" style="top:355.50px;font-size:18px;line-height:25px;color:#e8e2d4;font-family:'Liberation Sans','Noto Sans CJK SC',sans-serif;white-space:pre;left:1144.5px;letter-spacing:-2.500px;">1</span>
<div style="left:1108px;top:1071px;width:299px;height:1px;background:#555;"></div>
<div style="left:1108px;top:1072px;width:299px;height:39px;background:#282828;overflow:hidden;"></div>
<span id="t77" style="top:1079.60px;font-size:18px;line-height:25px;color:#d4d4d4;font-family:'Liberation Sans','Noto Sans CJK SC',sans-serif;white-space:pre;left:1122.28px;letter-spacing:0.822px;">2 /21 次请求</span>
<span id="t78" style="top:1079.60px;font-size:18px;line-height:25px;color:#d4d4d4;font-family:'Liberation Sans','Noto Sans CJK SC',sans-serif;white-space:pre;left:1242.28px;clip-path:inset(0 2px 0 0);letter-spacing:0.436px;">已传输1.3 kB/80.7 k</span>
<div style="left:1407px;top:1071px;width:10px;height:40px;background:#282828;"></div>
<div style="left:1407px;top:280.5px;width:1.2px;height:830px;background:#555;"></div>
<svg style="left:1428px;top:289.5px;" width="20" height="20" viewBox="0 0 20 20" preserveAspectRatio="none"><path d="M1.5 1.5 L18.5 18.5 M18.5 1.5 L1.5 18.5" stroke="#d0d0d0" stroke-width="1.6" stroke-linecap="round"/></svg>
<div style="left:1462px;top:283px;width:66px;height:36.5px;background:#202020;border-radius:6px 6px 0 0;"></div>
<div style="left:1462px;top:317.5px;width:66px;height:3px;background:#a8c7fa;border-radius:2px 2px 0 0;"></div>
<span id="t79" style="top:292.60px;font-size:18px;line-height:25px;color:#a8c7fa;font-family:'Liberation Sans','Noto Sans CJK SC',sans-serif;white-space:pre;left:1475.78px;letter-spacing:2.500px;">标头</span>
<span id="t80" style="top:292.60px;font-size:18px;line-height:25px;color:#b4b4b4;font-family:'Liberation Sans','Noto Sans CJK SC',sans-serif;white-space:pre;left:1542.28px;letter-spacing:2.120px;">预览</span>
<span id="t81" style="top:292.60px;font-size:18px;line-height:25px;color:#b4b4b4;font-family:'Liberation Sans','Noto Sans CJK SC',sans-serif;white-space:pre;left:1608.78px;letter-spacing:1.620px;">响应</span>
<span id="t82" style="top:292.60px;font-size:18px;line-height:25px;color:#b4b4b4;font-family:'Liberation Sans','Noto Sans CJK SC',sans-serif;white-space:pre;left:1674.28px;letter-spacing:0.707px;">发起程序</span>
<span id="t83" style="top:292.60px;font-size:18px;line-height:25px;color:#b4b4b4;font-family:'Liberation Sans','Noto Sans CJK SC',sans-serif;white-space:pre;left:1776.78px;letter-spacing:1.120px;">计时</span>
<span id="t84" style="top:292.00px;font-size:18px;line-height:25px;color:#b4b4b4;font-family:'Liberation Sans','Noto Sans CJK SC',sans-serif;white-space:pre;left:1843.5px;letter-spacing:0.694px;">Cookie</span>
<div style="left:2386px;top:320.5px;width:17px;height:790px;background:#2e2e2e;"></div>
<svg style="left:2390px;top:332px;" width="16.4" height="11" viewBox="0 0 16.4 11" preserveAspectRatio="none"><path d="M1 10 L7.5 0.8 Q8.2 0 8.9 0.8 L15.4 10 Q15.8 11 14.6 11 H1.8 Q0.6 11 1 10Z" fill="#9e9e9e"/></svg>
<div style="left:2391px;top:355px;width:14px;height:563px;background:#9e9e9e;border-radius:7px;"></div>
<svg style="left:2390px;top:1087px;" width="16.4" height="11" viewBox="0 0 16.4 11" preserveAspectRatio="none"><path d="M1 10 L7.5 0.8 Q8.2 0 8.9 0.8 L15.4 10 Q15.8 11 14.6 11 H1.8 Q0.6 11 1 10Z" fill="#9e9e9e" transform="rotate(180 8.2 5.5)"/></svg>
<svg style="left:1415px;top:335px;" width="11" height="10" viewBox="0 0 11 10" preserveAspectRatio="none"><path d="M0.5 0.8 H10.5 L5.5 9.5 Z" fill="#e0e0e0"/></svg>
<span id="t85" style="top:329.10px;font-size:18px;line-height:25px;color:#f0f0f0;font-family:'Liberation Sans','Noto Sans CJK SC',sans-serif;white-space:pre;left:1430.28px;letter-spacing:1.620px;">常规</span>
<div style="left:1408px;top:359px;width:978px;height:1px;background:#555;"></div>
<span id="t86" style="top:373.60px;font-size:16.6px;line-height:23px;color:#b8b8b8;font-family:'Liberation Sans','Noto Sans CJK SC',sans-serif;white-space:pre;left:1419.336px;letter-spacing:0.099px;">请求 URL</span>
<span id="t87" style="top:371.50px;font-size:18px;line-height:25px;color:#e6e6e6;font-family:'Liberation Sans','Noto Sans CJK SC',sans-serif;white-space:pre;left:1727.5px;letter-spacing:1.026px;">http://localhost:8080/api/shop/1</span>
<span id="t88" style="top:403.60px;font-size:16.6px;line-height:23px;color:#b8b8b8;font-family:'Liberation Sans','Noto Sans CJK SC',sans-serif;white-space:pre;left:1419.336px;letter-spacing:0.540px;">请求方法</span>
<span id="t89" style="top:401.50px;font-size:18px;line-height:25px;color:#e6e6e6;font-family:'Liberation Sans','Noto Sans CJK SC',sans-serif;white-space:pre;left:1727.5px;letter-spacing:-1.808px;">GET</span>
<span id="t90" style="top:433.60px;font-size:16.6px;line-height:23px;color:#b8b8b8;font-family:'Liberation Sans','Noto Sans CJK SC',sans-serif;white-space:pre;left:1419.336px;letter-spacing:0.540px;">状态代码</span>
<span id="t91" style="top:463.60px;font-size:16.6px;line-height:23px;color:#b8b8b8;font-family:'Liberation Sans','Noto Sans CJK SC',sans-serif;white-space:pre;left:1419.336px;letter-spacing:0.540px;">远程地址</span>
<span id="t92" style="top:461.50px;font-size:18px;line-height:25px;color:#e6e6e6;font-family:'Liberation Sans','Noto Sans CJK SC',sans-serif;white-space:pre;left:1727.5px;letter-spacing:0.221px;">127.0.0.1:8080</span>
<span id="t93" style="top:493.60px;font-size:16.6px;line-height:23px;color:#b8b8b8;font-family:'Liberation Sans','Noto Sans CJK SC',sans-serif;white-space:pre;left:1419.336px;letter-spacing:0.386px;">引用站点策略</span>
<span id="t94" style="top:491.50px;font-size:18px;line-height:25px;color:#e6e6e6;font-family:'Liberation Sans','Noto Sans CJK SC',sans-serif;white-space:pre;left:1727.5px;letter-spacing:0.925px;">strict-origin-when-cross-origin</span>
<div style="left:1727.5px;top:434px;width:18.5px;height:18.5px;background:#2fbf5f;border-radius:50%;"></div>
<span id="t95" style="top:431.50px;font-size:18px;line-height:25px;color:#e6e6e6;font-family:'Liberation Sans','Noto Sans CJK SC',sans-serif;white-space:pre;left:1752px;letter-spacing:0.471px;">200 OK</span>
<div style="left:1665px;top:353.5px;width:404px;height:52px;box-sizing:border-box;border:8.5px solid #ed1c24;border-radius:7px;"></div>
<div style="left:1408px;top:528px;width:978px;height:1px;background:#555;"></div>
<svg style="left:1415px;top:542px;" width="11" height="10" viewBox="0 0 11 10" preserveAspectRatio="none"><path d="M0.5 0.8 H10.5 L5.5 9.5 Z" fill="#e0e0e0"/></svg>
<span id="t96" style="top:536.10px;font-size:18px;line-height:25px;color:#f0f0f0;font-family:'Liberation Sans','Noto Sans CJK SC',sans-serif;white-space:pre;left:1430.28px;letter-spacing:0.207px;">响应标头</span>
<div style="left:1677px;top:536.5px;width:18px;height:18px;background:#3a3a3a;box-sizing:border-box;border:1.6px solid #7a7a7a;border-radius:4.5px;"></div>
<span id="t97" style="top:537.10px;font-size:18px;line-height:25px;color:#e6e6e6;font-family:'Liberation Sans','Noto Sans CJK SC',sans-serif;white-space:pre;left:1703.78px;letter-spacing:2.500px;">原始</span>
<div style="left:1408px;top:567px;width:978px;height:1px;background:#555;"></div>
<span id="t98" style="top:579.50px;font-size:18px;line-height:25px;color:#b8b8b8;font-family:'Liberation Sans','Noto Sans CJK SC',sans-serif;white-space:pre;left:1420px;letter-spacing:-0.120px;">Connection</span>
<span id="t99" style="top:579.50px;font-size:18px;line-height:25px;color:#e6e6e6;font-family:'Liberation Sans','Noto Sans CJK SC',sans-serif;white-space:pre;left:1727.5px;letter-spacing:0.606px;">keep-alive</span>
<span id="t100" style="top:615.50px;font-size:18px;line-height:25px;color:#b8b8b8;font-family:'Liberation Sans','Noto Sans CJK SC',sans-serif;white-space:pre;left:1420px;letter-spacing:-0.097px;">Content-Type</span>
<span id="t101" style="top:615.50px;font-size:18px;line-height:25px;color:#e6e6e6;font-family:'Liberation Sans','Noto Sans CJK SC',sans-serif;white-space:pre;left:1727.5px;letter-spacing:0.967px;">application/json</span>
<span id="t102" style="top:651.50px;font-size:18px;line-height:25px;color:#b8b8b8;font-family:'Liberation Sans','Noto Sans CJK SC',sans-serif;white-space:pre;left:1420px;letter-spacing:-0.177px;">Date</span>
<span id="t103" style="top:651.50px;font-size:18px;line-height:25px;color:#e6e6e6;font-family:'Liberation Sans','Noto Sans CJK SC',sans-serif;white-space:pre;left:1727.5px;letter-spacing:0.387px;">Sat, 24 May 2025 21:52:36 GMT</span>
<span id="t104" style="top:687.50px;font-size:18px;line-height:25px;color:#b8b8b8;font-family:'Liberation Sans','Noto Sans CJK SC',sans-serif;white-space:pre;left:1420px;letter-spacing:-0.603px;">Server</span>
<span id="t105" style="top:687.50px;font-size:18px;line-height:25px;color:#e6e6e6;font-family:'Liberation Sans','Noto Sans CJK SC',sans-serif;white-space:pre;left:1727.5px;letter-spacing:0.757px;">nginx/1.18.0</span>
<span id="t106" style="top:723.50px;font-size:18px;line-height:25px;color:#b8b8b8;font-family:'Liberation Sans','Noto Sans CJK SC',sans-serif;white-space:pre;left:1420px;letter-spacing:-0.338px;">Transfer-Encoding</span>
<span id="t107" style="top:723.50px;font-size:18px;line-height:25px;color:#e6e6e6;font-family:'Liberation Sans','Noto Sans CJK SC',sans-serif;white-space:pre;left:1727.5px;letter-spacing:0.823px;">chunked</span>
<div style="left:1408px;top:766px;width:978px;height:1px;background:#555;"></div>
<svg style="left:1415px;top:781px;" width="11" height="10" viewBox="0 0 11 10" preserveAspectRatio="none"><path d="M0.5 0.8 H10.5 L5.5 9.5 Z" fill="#e0e0e0"/></svg>
<span id="t108" style="top:775.10px;font-size:18px;line-height:25px;color:#f0f0f0;font-family:'Liberation Sans','Noto Sans CJK SC',sans-serif;white-space:pre;left:1430.28px;letter-spacing:0.207px;">请求标头</span>
<div style="left:1677px;top:775.5px;width:18px;height:18px;background:#3a3a3a;box-sizing:border-box;border:1.6px solid #7a7a7a;border-radius:4.5px;"></div>
<span id="t109" style="top:776.10px;font-size:18px;line-height:25px;color:#e6e6e6;font-family:'Liberation Sans','Noto Sans CJK SC',sans-serif;white-space:pre;left:1703.78px;letter-spacing:2.500px;">原始</span>
<div style="left:1408px;top:806px;width:978px;height:1px;background:#555;"></div>
<span id="t110" style="top:812.50px;font-size:18px;line-height:25px;color:#b8b8b8;font-family:'Liberation Sans','Noto Sans CJK SC',sans-serif;white-space:pre;left:1420px;letter-spacing:-0.106px;">Accept</span>
<span id="t111" style="top:812.50px;font-size:18px;line-height:25px;color:#e6e6e6;font-family:'Liberation Sans','Noto Sans CJK SC',sans-serif;white-space:pre;left:1727.5px;letter-spacing:0.933px;">application/json, text/plain, */*</span>
<span id="t112" style="top:842.50px;font-size:18px;line-height:25px;color:#b8b8b8;font-family:'Liberation Sans','Noto Sans CJK SC',sans-serif;white-space:pre;left:1420px;letter-spacing:-0.150px;">Accept-Encoding</span>
<span id="t113" style="top:842.50px;font-size:18px;line-height:25px;color:#e6e6e6;font-family:'Liberation Sans','Noto Sans CJK SC',sans-serif;white-space:pre;left:1727.5px;letter-spacing:0.564px;">gzip, deflate, br, zstd</span>
<span id="t114" style="top:872.50px;font-size:18px;line-height:25px;color:#b8b8b8;font-family:'Liberation Sans','Noto Sans CJK SC',sans-serif;white-space:pre;left:1420px;letter-spacing:-0.222px;">Accept-Language</span>
<span id="t115" style="top:872.50px;font-size:18px;line-height:25px;color:#e6e6e6;font-family:'Liberation Sans','Noto Sans CJK SC',sans-serif;white-space:pre;left:1727.5px;letter-spacing:0.526px;">zh-CN,zh;q=0.9,en;q=0.8,en-GB;q=0.7,en-US;q=0.6,zh-TW;q=0.5</span>
<span id="t116" style="top:902.50px;font-size:18px;line-height:25px;color:#b8b8b8;font-family:'Liberation Sans','Noto Sans CJK SC',sans-serif;white-space:pre;left:1420px;letter-spacing:0.202px;">Authorization</span>
<span id="t117" style="top:902.50px;font-size:18px;line-height:25px;color:#e6e6e6;font-family:'Liberation Sans','Noto Sans CJK SC',sans-serif;white-space:pre;left:1727.5px;letter-spacing:0.699px;">0e375b64375f46abbb1da5f7c09270b1</span>
<span id="t118" style="top:932.50px;font-size:18px;line-height:25px;color:#b8b8b8;font-family:'Liberation Sans','Noto Sans CJK SC',sans-serif;white-space:pre;left:1420px;letter-spacing:-0.120px;">Connection</span>
<span id="t119" style="top:932.50px;font-size:18px;line-height:25px;color:#e6e6e6;font-family:'Liberation Sans','Noto Sans CJK SC',sans-serif;white-space:pre;left:1727.5px;letter-spacing:0.606px;">keep-alive</span>
<span id="t120" style="top:962.50px;font-size:18px;line-height:25px;color:#b8b8b8;font-family:'Liberation Sans','Noto Sans CJK SC',sans-serif;white-space:pre;left:1420px;letter-spacing:-0.306px;">Cookie</span>
<span id="t121" style="top:962.50px;font-size:18px;line-height:25px;color:#e6e6e6;font-family:'Liberation Sans','Noto Sans CJK SC',sans-serif;white-space:pre;left:1727.5px;letter-spacing:-0.019px;">JSESSIONID=22B59469E76E37BE34C444798B13DDE1;</span>
<span id="t122" style="top:986.50px;font-size:18px;line-height:25px;color:#e6e6e6;font-family:'Liberation Sans','Noto Sans CJK SC',sans-serif;white-space:pre;left:1727.5px;letter-spacing:0.291px;">amp_adc4c4=Qa6yCCIKaWovuxok2t3EFO...1is23aicp.1is24h5p6.0.0.0</span>
<span id="t123" style="top:1016.50px;font-size:18px;line-height:25px;color:#b8b8b8;font-family:'Liberation Sans','Noto Sans CJK SC',sans-serif;white-space:pre;left:1420px;letter-spacing:-0.005px;">Host</span>
<span id="t124" style="top:1016.50px;font-size:18px;line-height:25px;color:#e6e6e6;font-family:'Liberation Sans','Noto Sans CJK SC',sans-serif;white-space:pre;left:1727.5px;letter-spacing:0.608px;">localhost:8080</span>
<span id="t125" style="top:1046.50px;font-size:18px;line-height:25px;color:#b8b8b8;font-family:'Liberation Sans','Noto Sans CJK SC',sans-serif;white-space:pre;left:1420px;letter-spacing:-0.589px;">Referer</span>
<span id="t126" style="top:1046.50px;font-size:18px;line-height:25px;color:#e6e6e6;font-family:'Liberation Sans','Noto Sans CJK SC',sans-serif;white-space:pre;left:1727.5px;letter-spacing:0.935px;">http://localhost:8080/shop-detail.html?id=1</span>
<span id="t127" style="top:1076.50px;font-size:18px;line-height:25px;color:#b8b8b8;font-family:'Liberation Sans','Noto Sans CJK SC',sans-serif;white-space:pre;left:1420px;letter-spacing:-0.691px;">Sec-Ch-Ua</span>
<span id="t128" style="top:1076.50px;font-size:18px;line-height:25px;color:#e6e6e6;font-family:'Liberation Sans','Noto Sans CJK SC',sans-serif;white-space:pre;left:1727.5px;letter-spacing:0.855px;">&quot;Chromium&quot;;v=&quot;136&quot;, &quot;Microsoft Edge&quot;;v=&quot;136&quot;, &quot;Not.A/Brand&quot;;v=&quot;99&quot;</span>
<div style="left:1108px;top:1111px;width:1295px;height:1px;background:#555;"></div>
<div style="left:1108px;top:1112px;width:1295px;height:40.5px;background:#3c3c3c;"></div>
<div style="left:1108px;top:1152px;width:1295px;height:1px;background:#555;"></div>
<div style="left:1108px;top:1115px;width:84px;height:38px;background:#282828;border-radius:6px 6px 0 0;"></div>
<span id="t129" style="top:1124.60px;font-size:18px;line-height:25px;color:#a8c7fa;font-family:'Liberation Sans','Noto Sans CJK SC',sans-serif;white-space:pre;left:1122.28px;letter-spacing:0.560px;">控制台</span>
<span id="t130" style="top:1124.60px;font-size:18px;line-height:25px;color:#b4b4b4;font-family:'Liberation Sans','Noto Sans CJK SC',sans-serif;white-space:pre;left:1206.28px;letter-spacing:1.620px;">问题</span>
<span id="t131" style="top:1124.60px;font-size:18px;line-height:25px;color:#b4b4b4;font-family:'Liberation Sans','Noto Sans CJK SC',sans-serif;white-space:pre;left:1272.78px;letter-spacing:0.373px;">自动填充</span>
<svg style="left:1372px;top:1121px;" width="22" height="22" viewBox="0 0 22 22" preserveAspectRatio="none"><path d="M11 1.5 V20.5 M1.5 11 H20.5" stroke="#c4c4c4" stroke-width="1.7" stroke-linecap="round"/></svg>
<svg style="left:2327px;top:1122px;" width="27" height="20" viewBox="0 0 27 20" preserveAspectRatio="none"><g fill="none" stroke="#c4c4c4" stroke-width="1.6" stroke-linecap="round" stroke-linejoin="round"><path d="M9 6 V4.3 Q9 2.5 10.8 2.5 H12 M15 2.5 H18 M21 2.5 H22.3 Q24 2.5 24 4.3 V6"/><rect x="9" y="8.5" width="15" height="9.5" rx="2"/><path d="M4.5 3 Q0.5 6.5 3.5 11.5 M1.2 11.8 L3.8 12 L4.2 9.2"/></g></svg>
<div style="left:2365px;top:1118px;width:32px;height:30px;background:#424242;border-radius:4px;"></div>
<svg style="left:2368px;top:1122px;" width="27" height="20" viewBox="0 0 27 20" preserveAspectRatio="none"><g fill="none" stroke="#c4c4c4" stroke-width="1.6" stroke-linecap="round" stroke-linejoin="round"><rect x="1.5" y="1.5" width="23" height="16.5" rx="2.5"/><path d="M1.5 12.5 H24.5 M13 4 V10 M10.3 7.6 L13 10.2 L15.7 7.6"/></g></svg>
<div style="left:1108px;top:1153px;width:1295px;height:39px;background:#282828;"></div>
<div style="left:1108px;top:1192px;width:1295px;height:1px;background:#555;"></div>
<svg style="left:1119px;top:1162px;" width="27" height="21" viewBox="0 0 27 21" preserveAspectRatio="none"><rect x="1.5" y="1.5" width="23" height="17.5" rx="2.5" fill="none" stroke="#d4d4d4" stroke-width="1.7"/><path d="M1.5 3.5 Q1.5 1.5 3.5 1.5 H8.5 V19 H3.5 Q1.5 19 1.5 17Z" fill="#d4d4d4"/><path d="M12 10.2 H20.5 M17.3 6.8 L20.7 10.2 L17.3 13.6" fill="none" stroke="#d4d4d4" stroke-width="1.6" stroke-linecap="round" stroke-linejoin="round"/></svg>
<svg style="left:1161px;top:1159px;" width="26" height="26" viewBox="0 0 26 26" preserveAspectRatio="none"><circle cx="13" cy="13" r="11.3" fill="none" stroke="#c4c4c4" stroke-width="1.7"/><path d="M5.2 20.8 L20.8 5.2" stroke="#c4c4c4" stroke-width="1.7"/></svg>
<div style="left:1198px;top:1157.5px;width:75px;height:29.5px;background:#474747;border-radius:4px;"></div>
<span id="t132" style="top:1158.50px;font-size:19.5px;line-height:27px;color:#e0e0e0;font-family:'Liberation Sans','Noto Sans CJK SC',sans-serif;white-space:pre;left:1207.5px;letter-spacing:0.695px;">top</span>
<svg style="left:1247.5px;top:1167.5px;" width="16" height="11.7" viewBox="0 0 16 11.7" preserveAspectRatio="none"><path d="M1.8 0.2 H14.2 Q16.4 0.2 15.2 2.1 L9.1 10.799999999999999 Q8.0 12.2 6.9 10.799999999999999 L0.8 2.1 Q-0.4 0.2 1.8 0.2Z" fill="#dcdcdc"/></svg>
<svg style="left:1285px;top:1161px;" width="25" height="21" viewBox="0 0 25 21" preserveAspectRatio="none"><g fill="none" stroke="#c4c4c4" stroke-width="1.7" stroke-linecap="round" stroke-linejoin="round"><path d="M1.5 12 Q12.5 -3.5 23.5 12"/><circle cx="12.5" cy="12.3" r="4.6"/></g></svg>
<div style="left:1322px;top:1157px;width:856px;height:30px;background:#3c3c3c;border-radius:15px;"></div>
<svg style="left:1337px;top:1165px;" width="18" height="14" viewBox="0 0 18 14" preserveAspectRatio="none"><path d="M1 1.5 H17 M4 7 H14 M6.5 12.5 H11.5" stroke="#c4c4c4" stroke-width="1.9" stroke-linecap="round"/></svg>
<span id="t133" style="top:1161.60px;font-size:18px;line-height:25px;color:#c8c8c8;font-family:'Liberation Sans','Noto Sans CJK SC',sans-serif;white-space:pre;left:1363.78px;letter-spacing:0.560px;">筛选器</span>
<span id="t134" style="top:1161.60px;font-size:18px;line-height:25px;color:#d4d4d4;font-family:'Liberation Sans','Noto Sans CJK SC',sans-serif;white-space:pre;left:2193.28px;letter-spacing:0.207px;">默认级别</span>
<svg style="left:2276px;top:1169.5px;" width="16" height="11.7" viewBox="0 0 16 11.7" preserveAspectRatio="none"><path d="M1.8 0.2 H14.2 Q16.4 0.2 15.2 2.1 L9.1 10.799999999999999 Q8.0 12.2 6.9 10.799999999999999 L0.8 2.1 Q-0.4 0.2 1.8 0.2Z" fill="#dcdcdc"/></svg>
<svg style="left:2310px;top:1163px;" width="19" height="17" viewBox="0 0 19 17" preserveAspectRatio="none"><path d="M9.5 0.8 A8 7.6 0 1 1 5.2 14.9 L1.2 16 L2.5 12.4 A8 7.6 0 0 1 9.5 0.8Z" fill="#7cacf8"/><path d="M6 6.8 H13 M6 10 H10.5" stroke="#282828" stroke-width="1.5" stroke-linecap="round"/></svg>
<span id="t135" style="top:1158.00px;font-size:18px;line-height:25px;color:#d4d4d4;font-family:'Liberation Sans','Noto Sans CJK SC',sans-serif;white-space:pre;left:2335px;letter-spacing:0.969px;">48</span>
<svg style="left:2368px;top:1159px;" width="26" height="26" viewBox="0 0 26 26" preserveAspectRatio="none"><path d="M15.54 1.07 L10.46 1.07 L9.97 4.95 L7.54 6.35 L3.94 4.83 L1.39 9.24 L4.51 11.60 L4.51 14.40 L1.39 16.76 L3.94 21.17 L7.54 19.65 L9.97 21.05 L10.46 24.93 L15.54 24.93 L16.03 21.05 L18.46 19.65 L22.06 21.17 L24.61 16.76 L21.49 14.40 L21.49 11.60 L24.61 9.24 L22.06 4.83 L18.46 6.35 L16.03 4.95Z" fill="none" stroke="#c4c4c4" stroke-width="1.7" stroke-linejoin="round"/><circle cx="13" cy="13" r="3.5" fill="none" stroke="#c4c4c4" stroke-width="1.7"/></svg>
<div style="left:1108px;top:1193px;width:1295px;height:218px;background:#282828;"></div>
<div style="left:2386px;top:1193px;width:17px;height:218px;background:#2e2e2e;"></div>
<svg style="left:2390px;top:1205.5px;" width="16.4" height="11" viewBox="0 0 16.4 11" preserveAspectRatio="none"><path d="M1 10 L7.5 0.8 Q8.2 0 8.9 0.8 L15.4 10 Q15.8 11 14.6 11 H1.8 Q0.6 11 1 10Z" fill="#9e9e9e"/></svg>
<div style="left:2391px;top:1237px;width:14px;height:139px;background:#9e9e9e;border-radius:7px;"></div>
<svg style="left:2390px;top:1388.5px;" width="16.4" height="11" viewBox="0 0 16.4 11" preserveAspectRatio="none"><path d="M1 10 L7.5 0.8 Q8.2 0 8.9 0.8 L15.4 10 Q15.8 11 14.6 11 H1.8 Q0.6 11 1 10Z" fill="#9e9e9e" transform="rotate(180 8.2 5.5)"/></svg>
<span id="t136" style="top:1187.20px;font-size:16.5px;line-height:23px;color:#e6e6e6;font-family:'DejaVu Sans Mono','Liberation Mono',monospace;white-space:pre;left:1150px;">Download the Vue Devtools extension for a better development experience:</span>
<span id="t137" style="top:1209.20px;font-size:16.5px;line-height:23px;color:#7cacf8;font-family:'DejaVu Sans Mono','Liberation Mono',monospace;white-space:pre;left:1150px;text-decoration:underline;text-underline-offset:2.5px;text-decoration-thickness:1.3px;">https://github.com/vuejs/vue-devtools</span>
<span id="t138" style="top:1186.70px;font-size:16.5px;line-height:23px;color:#7cacf8;font-family:'DejaVu Sans Mono','Liberation Mono',monospace;white-space:pre;right:66px;text-decoration:underline;text-underline-offset:2.5px;text-decoration-thickness:1.3px;">vue.js:8542</span>
<div style="left:1150px;top:1237px;width:1193px;height:1px;background:#484848;"></div>
<span id="t139" style="top:1241.70px;font-size:16.5px;line-height:23px;color:#e6e6e6;font-family:'DejaVu Sans Mono','Liberation Mono',monospace;white-space:pre;left:1150px;">You are running Vue in development mode.</span>
<span id="t140" style="top:1264.70px;font-size:16.5px;line-height:23px;color:#e6e6e6;font-family:'DejaVu Sans Mono','Liberation Mono',monospace;white-space:pre;left:1150px;">Make sure to turn on production mode when deploying for production.</span>
<span id="t141" style="top:1286.70px;font-size:16.5px;line-height:23px;color:#e6e6e6;font-family:'DejaVu Sans Mono','Liberation Mono',monospace;white-space:pre;left:1150px;">See more tips at </span>
<span id="t142" style="top:1286.70px;font-size:16.5px;line-height:23px;color:#7cacf8;font-family:'DejaVu Sans Mono','Liberation Mono',monospace;white-space:pre;left:1318px;text-decoration:underline;text-underline-offset:2.5px;text-decoration-thickness:1.3px;">https://vuejs.org/guide/deployment.html</span>
<span id="t143" style="top:1241.70px;font-size:16.5px;line-height:23px;color:#7cacf8;font-family:'DejaVu Sans Mono','Liberation Mono',monospace;white-space:pre;right:66px;text-decoration:underline;text-underline-offset:2.5px;text-decoration-thickness:1.3px;">vue.js:8553</span>
<div style="left:1150px;top:1315px;width:1193px;height:1px;background:#484848;"></div>
<span id="t144" style="top:1319.70px;font-size:16.5px;line-height:23px;color:#e6e6e6;font-family:'DejaVu Sans Mono','Liberation Mono',monospace;white-space:pre;left:1150px;">Content Page Weava init: 2.0.44 prod</span>
<span id="t145" style="top:1319.70px;font-size:16.5px;line-height:23px;color:#7cacf8;font-family:'DejaVu Sans Mono','Liberation Mono',monospace;white-space:pre;right:66px;text-decoration:underline;text-underline-offset:2.5px;text-decoration-thickness:1.3px;">contentPage.js:2</span>
<svg style="left:1126px;top:1358px;" width="11" height="17" viewBox="0 0 11 17" preserveAspectRatio="none"><path d="M1.5 1.5 L9 8.5 L1.5 15.5" fill="none" stroke="#7cacf8" stroke-width="1.9" stroke-linecap="round" stroke-linejoin="round"/></svg>
</body></html>
